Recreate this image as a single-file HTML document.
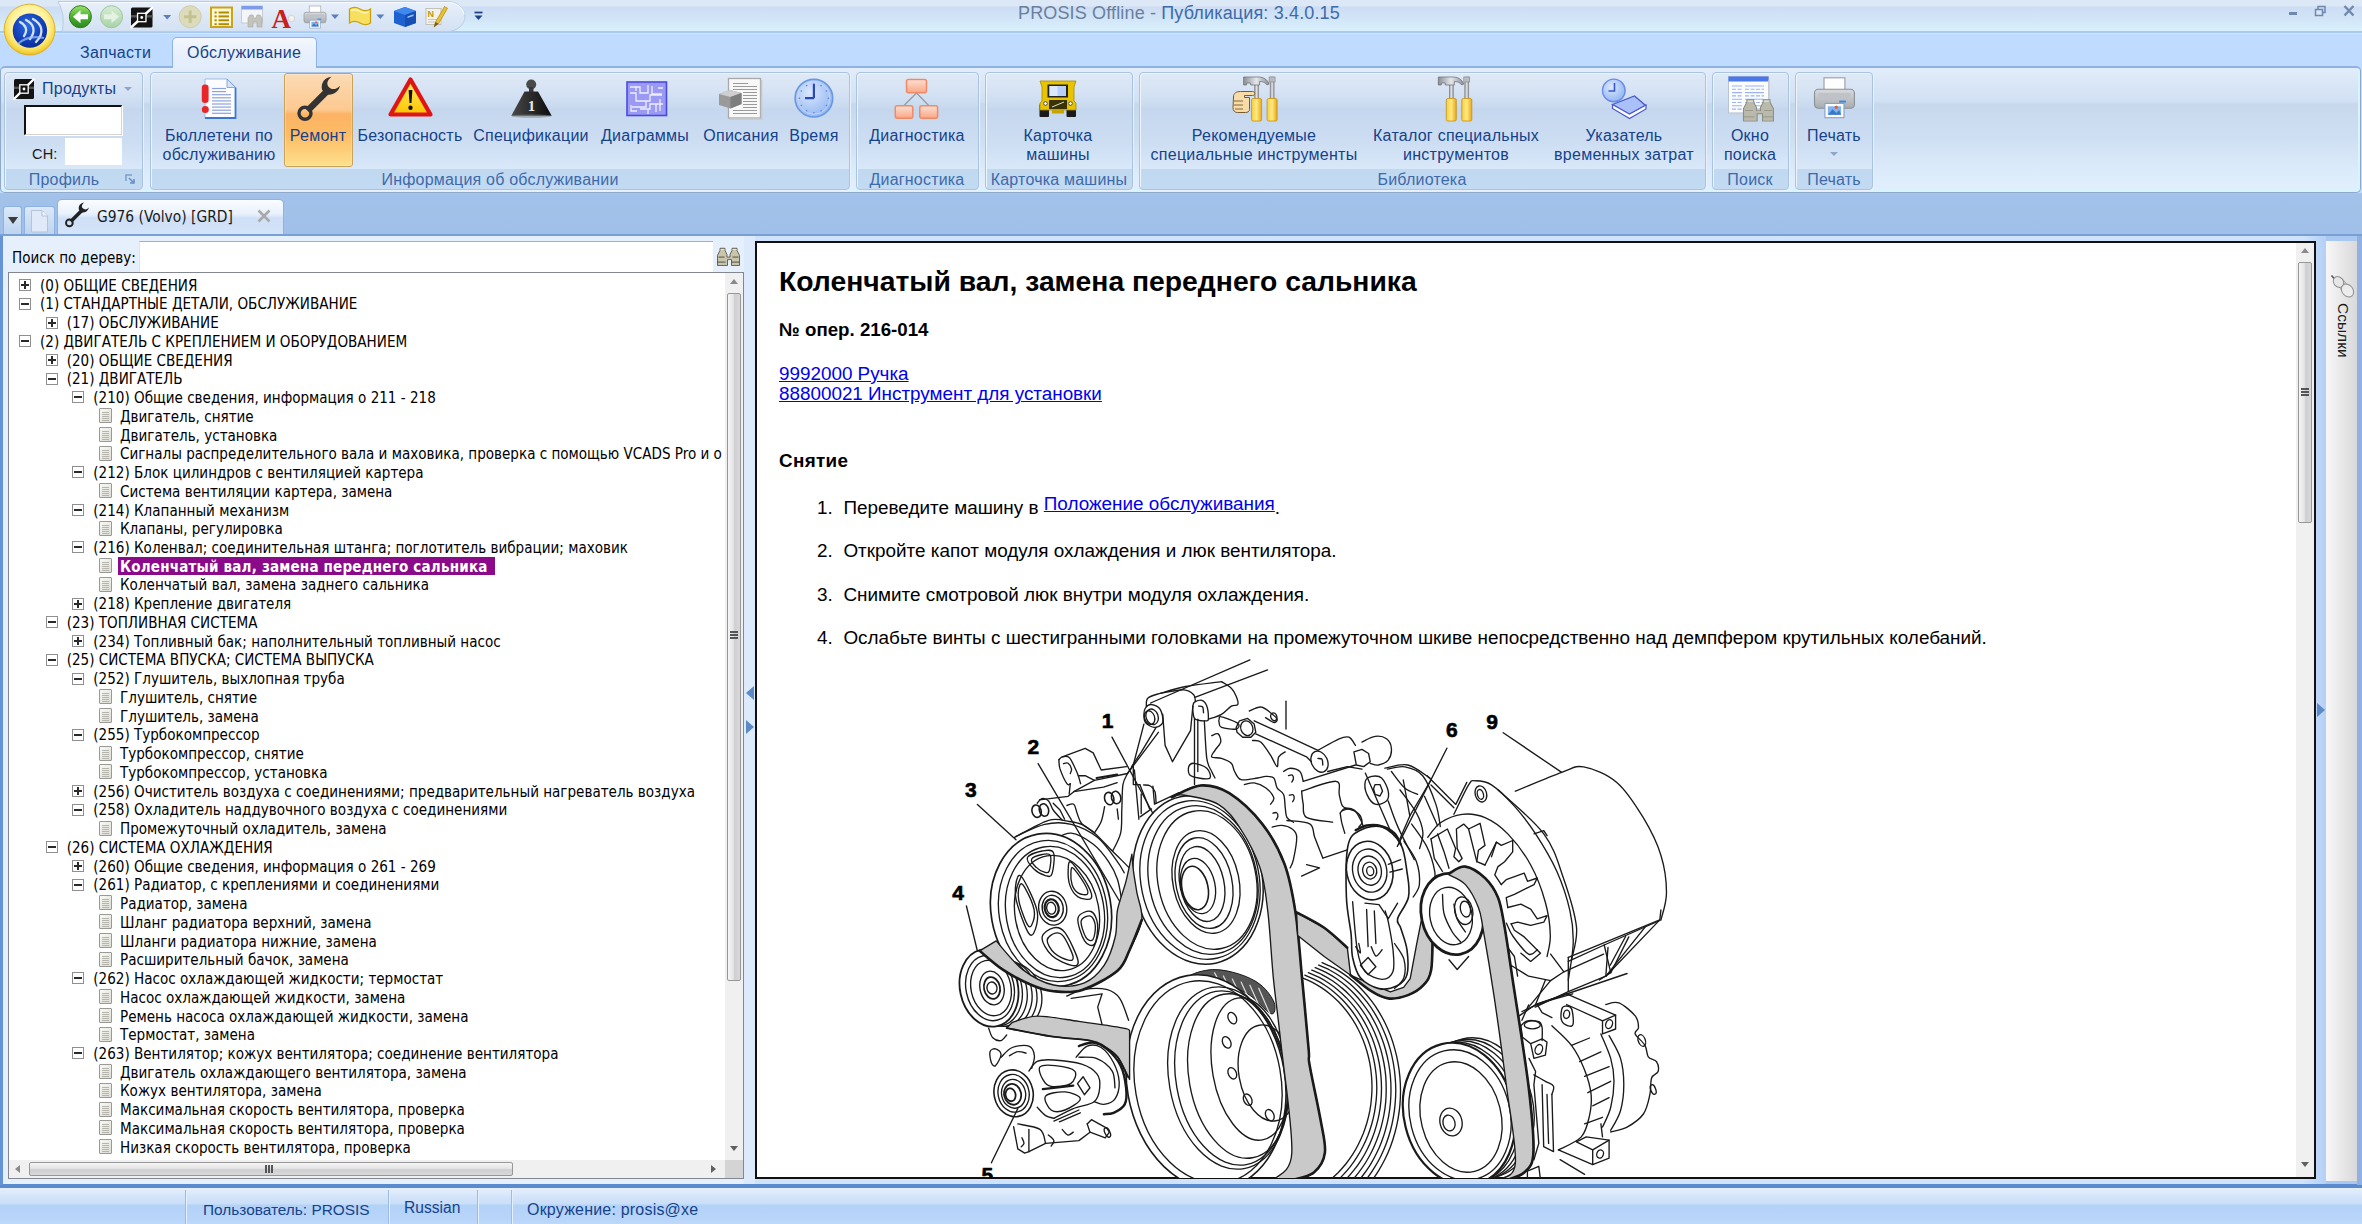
<!DOCTYPE html>
<html lang="ru"><head><meta charset="utf-8"><title>PROSIS Offline</title>
<style>
*{box-sizing:border-box;margin:0;padding:0}
html,body{width:2362px;height:1224px;overflow:hidden}
body{position:relative;background:#bfdbff;font-family:"Liberation Sans",sans-serif;color:#15428b}
.abs,.abs>*{position:absolute}
.abs{left:0;top:0}
.t{white-space:nowrap;line-height:1}
/* title */
#title{left:0;top:0;width:2362px;height:31px;background:linear-gradient(#dde8f7 0,#dde8f7 6px,#cdddf4 7px,#d2e6f8 20px,#d9f0fc 30px,#d9f0fc 31px)}
#tline1{left:0;top:31px;width:2362px;height:2px;background:#a6caf3}
#tline2{left:0;top:33px;width:2362px;height:1px;background:#dde4f3}
#tabrow{left:0;top:34px;width:2362px;height:33px;background:#bfdbff}
#titletxt{left:1018px;top:4px;font-size:18px;letter-spacing:.15px;color:#6a7f9c}
#titletxt b{font-weight:normal;color:#3e6aaa}
/* ribbon */
#ribbon{left:0px;top:66px;width:2361px;height:127px;border:1px solid #8fa9cb;border-top:2px solid #8db2e3;border-radius:5px;box-shadow:inset -1px -1px 0 1px #d6f5fd;background:linear-gradient(#e3edfb 0,#dbe7f7 14px,#d1e0f4 34px,#c7d8ed 36px,#cfdff3 70px,#dbeafa 100px,#e1effd 122px)}
#ribglow{left:0;top:193px;width:2362px;height:1px;background:#a9c4e8}
.grp{border:1px solid #a9c3e3;border-radius:4px;top:72px;height:118px;background:linear-gradient(#dfe9f6 0,#d6e3f4 18px,#c9daef 34px,#c5d7ee 36px,#cddef3 70px,#d9e8f9 96px,#c1d8f1 96px,#c3daf3 117px);box-shadow:1px 1px 0 #e9f2fc, inset 1px 1px 0 #eef4fc}
.glab{font-size:16px;letter-spacing:.2px;color:#3e6aaa;top:172px;text-align:center}
.blab{font-size:16px;letter-spacing:.25px;color:#15428b;text-align:center;line-height:18.5px;white-space:nowrap}
.tabl{font-size:16px;letter-spacing:.3px;color:#15428b}
/* doc tabs */
#dstrip{left:0;top:194px;width:2362px;height:41px;background:linear-gradient(#a3c2ea,#a0c0e9)}
/* tree */
.tr{font-family:"DejaVu Sans Condensed","Liberation Sans",sans-serif;font-size:15.05px;color:#000;white-space:nowrap;line-height:1}
.ex{width:12px;height:12px;border:1px solid #8f8f8f;background:#fff}
.ex i{position:absolute;left:1px;top:4px;width:8px;height:2px;background:#2a2a2a}
.ex b{position:absolute;left:4px;top:1px;width:2px;height:8px;background:#2a2a2a}
.lf{width:13px;height:15px;border:1px solid #9a9a94;background:linear-gradient(135deg,#fafaf6,#dcdcd4);border-radius:1px}
.lf:before{content:"";position:absolute;left:2px;top:3px;width:7px;height:1px;background:#b5b5ad;box-shadow:0 2px 0 #b5b5ad,0 4px 0 #b5b5ad,0 6px 0 #b5b5ad,0 8px 0 #b5b5ad}
/* doc */
.doc{font-family:"Liberation Sans",sans-serif;color:#000;white-space:nowrap;line-height:1}
.doc a,.lnk{color:#0000ee;text-decoration:underline}
/* status */
#status{left:0;top:1188px;width:2362px;height:36px;background:linear-gradient(#e6f0fc 0,#d3e4fa 9px,#c9def9 16px,#b3d2f8 17px,#b7d4f9 28px,#bcd8fa 36px)}
.st{font-size:16px;color:#15428b;top:1201.5px}
.ssep{top:1190px;width:2px;height:34px;background:linear-gradient(90deg,#9cbce6 50%,#e4effc 50%)}

</style></head>
<body>
<div class="abs">
<div id="title"></div><div id="tline1"></div><div id="tline2"></div><div id="tabrow"></div>
<div id="titletxt" class="t">PROSIS Offline - <b>Публикация: 3.4.0.15</b></div>
<div id="ribbon"></div><div id="ribglow"></div>
<div id="dstrip"></div>
</div>
<div class="abs" id="rib">
<div style="left:172px;top:37px;width:145px;height:31px;border:1px solid #8db2e3;border-bottom:none;border-radius:5px 5px 0 0;background:linear-gradient(#f4f8fd,#e6effb 60%,#e3edfb)"></div>
<div class="t tabl" style="left:80px;top:45px">Запчасти</div>
<div class="t tabl" style="left:187px;top:45px">Обслуживание</div>
<div class="grp" style="left:4px;width:139px"></div>
<div class="t glab" style="left:-86px;width:300px">Профиль</div>
<div class="grp" style="left:150px;width:700px"></div>
<div class="t glab" style="left:350px;width:300px">Информация об обслуживании</div>
<div class="grp" style="left:856px;width:123px"></div>
<div class="t glab" style="left:767px;width:300px">Диагностика</div>
<div class="grp" style="left:985px;width:148px"></div>
<div class="t glab" style="left:909px;width:300px">Карточка машины</div>
<div class="grp" style="left:1139px;width:567px"></div>
<div class="t glab" style="left:1272px;width:300px">Библиотека</div>
<div class="grp" style="left:1712px;width:77px"></div>
<div class="t glab" style="left:1600px;width:300px">Поиск</div>
<div class="grp" style="left:1795px;width:78px"></div>
<div class="t glab" style="left:1684px;width:300px">Печать</div>
<div style="left:284px;top:73px;width:69px;height:94px;border:1px solid #c9a35c;border-radius:3px;background:linear-gradient(#fbdbb5 0,#fdc98f 36px,#fcb365 40px,#fdbb63 60px,#fee08e 92px);box-shadow:inset 0 0 0 1px rgba(255,255,255,.25)"></div>
<div class="t blab" style="left:69px;width:300px;top:127.0px">Бюллетени по</div>
<div class="t blab" style="left:69px;width:300px;top:145.5px">обслуживанию</div>
<div class="t blab" style="left:168px;width:300px;top:127.0px">Ремонт</div>
<div class="t blab" style="left:260px;width:300px;top:127.0px">Безопасность</div>
<div class="t blab" style="left:381px;width:300px;top:127.0px">Спецификации</div>
<div class="t blab" style="left:495px;width:300px;top:127.0px">Диаграммы</div>
<div class="t blab" style="left:591px;width:300px;top:127.0px">Описания</div>
<div class="t blab" style="left:664px;width:300px;top:127.0px">Время</div>
<div class="t blab" style="left:767px;width:300px;top:127.0px">Диагностика</div>
<div class="t blab" style="left:908px;width:300px;top:127.0px">Карточка</div>
<div class="t blab" style="left:908px;width:300px;top:145.5px">машины</div>
<div class="t blab" style="left:1104px;width:300px;top:127.0px">Рекомендуемые</div>
<div class="t blab" style="left:1104px;width:300px;top:145.5px">специальные инструменты</div>
<div class="t blab" style="left:1306px;width:300px;top:127.0px">Каталог специальных</div>
<div class="t blab" style="left:1306px;width:300px;top:145.5px">инструментов</div>
<div class="t blab" style="left:1474px;width:300px;top:127.0px">Указатель</div>
<div class="t blab" style="left:1474px;width:300px;top:145.5px">временных затрат</div>
<div class="t blab" style="left:1600px;width:300px;top:127.0px">Окно</div>
<div class="t blab" style="left:1600px;width:300px;top:145.5px">поиска</div>
<div class="t blab" style="left:1684px;width:300px;top:127.0px">Печать</div>
<div style="left:1830px;top:152px;width:0;height:0;border:4px solid transparent;border-top:4px solid #8ea6c8;border-bottom:none"></div>
<div class="t blab" style="left:42px;top:80px">Продукты</div>
<div style="left:124px;top:87px;width:0;height:0;border:4px solid transparent;border-top:4px solid #8ea6c8;border-bottom:none"></div>
<div style="left:24px;top:105px;width:98px;height:30px;background:#fff;border:2px solid #111;border-right:1px solid #d8d4cc;border-bottom:1px solid #d8d4cc;box-shadow:1px 1px 0 #fff"></div>
<div class="t" style="left:32px;top:147px;font-size:14.5px;color:#1a1a1a;letter-spacing:.2px">CH:</div>
<div style="left:65px;top:138px;width:57px;height:27px;background:#fff"></div>
<svg style="left:125px;top:174px" width="12" height="12" viewBox="0 0 12 12"><path d="M1 7V1h6" fill="none" stroke="#7f9fca" stroke-width="1.5"/><path d="M4 4l5 5M9 5v4H5" fill="none" stroke="#6b8fc4" stroke-width="1.6"/></svg>
</div>
<div class="abs" id="left">
<div style="left:3px;top:206px;width:19px;height:29px;border:1px solid #8db2e3;border-bottom:none;border-radius:3px 3px 0 0;background:linear-gradient(#dce9f8,#bcd4f0)"></div>
<div style="left:8px;top:217px;width:0;height:0;border:5px solid transparent;border-top:7px solid #3b3b3b;border-bottom:none"></div>
<div style="left:24px;top:206px;width:31px;height:29px;border:1px solid #8db2e3;border-bottom:none;border-radius:3px 3px 0 0;background:linear-gradient(#dce9f8,#bcd4f0)"></div>
<svg style="left:31px;top:210px" width="18" height="23" viewBox="0 0 18 23"><path d="M.5 .5h10.500l5.500 5.500v16h-16z" fill="#dfe9f7" stroke="#b3c3da"/><path d="M11 .5v5.500h5.500" fill="#eef3fb" stroke="#b3c3da"/></svg>
<div style="left:57px;top:199px;width:227px;height:37px;border:1px solid #8db2e3;border-bottom:none;border-radius:5px 5px 0 0;background:linear-gradient(#fafcff 0,#e9f1fc 14px,#cfe0f7 18px,#d4e4f9 36px)"></div>
<div class="t" style="left:97px;top:209.5px;font-family:'DejaVu Sans Condensed','Liberation Sans',sans-serif;font-size:15.4px;color:#1a1a1a">G976 (Volvo) [GRD]</div>
<svg style="left:256px;top:208px" width="16" height="16" viewBox="0 0 16 16"><path d="M2.5 2.5l11 11M13.5 2.5l-11 11" stroke="#a9a9a9" stroke-width="2.6" fill="none"/></svg>
<div style="left:0;top:234px;width:2362px;height:2px;background:#79a0d4"></div>
<div style="left:0;top:236px;width:2362px;height:949px;background:#a9c8f1"></div>
<div style="left:3px;top:236px;width:2323px;height:948px;background:linear-gradient(90deg,#cfe3fc,#cfe3fc 2300px,#b4d0f6)"></div>
<div style="left:3px;top:236px;width:746px;height:948px;background:#e6f0fc"></div>
<div style="left:744px;top:236px;width:11px;height:948px;background:#dceafb"></div>
<div style="left:0;top:1184px;width:2362px;height:4.5px;background:#5b8bcf"></div>
<div style="left:0;top:236px;width:2.5px;height:949px;background:#6494d7"></div>
<div class="t tr" style="left:12px;top:251px">Поиск по дереву:</div>
<div style="left:139px;top:241px;width:574px;height:31px;background:#fff;border-top:1px solid #abadb3;border-left:1px solid #dfe3ea"></div>
<div style="left:8px;top:272px;width:736px;height:907px;background:#fff;border:1px solid #828790"></div>
<div class="ex" style="left:19.0px;top:279.0px"><i></i><b></b></div>
<div class="t tr" style="left:40.0px;top:278.6px">(0) ОБЩИЕ СВЕДЕНИЯ</div>
<div class="ex" style="left:19.0px;top:297.7px"><i></i></div>
<div class="t tr" style="left:40.0px;top:297.3px">(1) СТАНДАРТНЫЕ ДЕТАЛИ, ОБСЛУЖИВАНИЕ</div>
<div class="ex" style="left:45.7px;top:316.5px"><i></i><b></b></div>
<div class="t tr" style="left:66.7px;top:316.1px">(17) ОБСЛУЖИВАНИЕ</div>
<div class="ex" style="left:19.0px;top:335.2px"><i></i></div>
<div class="t tr" style="left:40.0px;top:334.8px">(2) ДВИГАТЕЛЬ С КРЕПЛЕНИЕМ И ОБОРУДОВАНИЕМ</div>
<div class="ex" style="left:45.7px;top:354.0px"><i></i><b></b></div>
<div class="t tr" style="left:66.7px;top:353.6px">(20) ОБЩИЕ СВЕДЕНИЯ</div>
<div class="ex" style="left:45.7px;top:372.7px"><i></i></div>
<div class="t tr" style="left:66.7px;top:372.3px">(21) ДВИГАТЕЛЬ</div>
<div class="ex" style="left:72.3px;top:391.4px"><i></i></div>
<div class="t tr" style="left:93.3px;top:391.0px">(210) Общие сведения, информация о 211 - 218</div>
<div class="lf" style="left:99px;top:408.2px"></div>
<div class="t tr" style="left:120px;top:409.8px">Двигатель, снятие</div>
<div class="lf" style="left:99px;top:426.9px"></div>
<div class="t tr" style="left:120px;top:428.5px">Двигатель, установка</div>
<div class="lf" style="left:99px;top:445.7px"></div>
<div class="t tr" style="left:120px;top:447.3px">Сигналы распределительного вала и маховика, проверка с помощью VCADS Pro и о</div>
<div class="ex" style="left:72.3px;top:466.4px"><i></i></div>
<div class="t tr" style="left:93.3px;top:466.0px">(212) Блок цилиндров с вентиляцией картера</div>
<div class="lf" style="left:99px;top:483.1px"></div>
<div class="t tr" style="left:120px;top:484.7px">Система вентиляции картера, замена</div>
<div class="ex" style="left:72.3px;top:503.9px"><i></i></div>
<div class="t tr" style="left:93.3px;top:503.5px">(214) Клапанный механизм</div>
<div class="lf" style="left:99px;top:520.6px"></div>
<div class="t tr" style="left:120px;top:522.2px">Клапаны, регулировка</div>
<div class="ex" style="left:72.3px;top:541.4px"><i></i></div>
<div class="t tr" style="left:93.3px;top:541.0px">(216) Коленвал; соединительная штанга; поглотитель вибрации; маховик</div>
<div class="lf" style="left:99px;top:558.1px"></div>
<div style="left:118px;top:557.1px;width:377px;height:18px;background:#8a0a8a"></div>
<div class="t tr" style="left:120px;top:559.7px;font-weight:bold;color:#fff;letter-spacing:.18px">Коленчатый вал, замена переднего сальника</div>
<div class="lf" style="left:99px;top:576.8px"></div>
<div class="t tr" style="left:120px;top:578.4px">Коленчатый вал, замена заднего сальника</div>
<div class="ex" style="left:72.3px;top:597.6px"><i></i><b></b></div>
<div class="t tr" style="left:93.3px;top:597.2px">(218) Крепление двигателя</div>
<div class="ex" style="left:45.7px;top:616.3px"><i></i></div>
<div class="t tr" style="left:66.7px;top:615.9px">(23) ТОПЛИВНАЯ СИСТЕМА</div>
<div class="ex" style="left:72.3px;top:635.1px"><i></i><b></b></div>
<div class="t tr" style="left:93.3px;top:634.7px">(234) Топливный бак; наполнительный топливный насос</div>
<div class="ex" style="left:45.7px;top:653.8px"><i></i></div>
<div class="t tr" style="left:66.7px;top:653.4px">(25) СИСТЕМА ВПУСКА; СИСТЕМА ВЫПУСКА</div>
<div class="ex" style="left:72.3px;top:672.5px"><i></i></div>
<div class="t tr" style="left:93.3px;top:672.1px">(252) Глушитель, выхлопная труба</div>
<div class="lf" style="left:99px;top:689.3px"></div>
<div class="t tr" style="left:120px;top:690.9px">Глушитель, снятие</div>
<div class="lf" style="left:99px;top:708.0px"></div>
<div class="t tr" style="left:120px;top:709.6px">Глушитель, замена</div>
<div class="ex" style="left:72.3px;top:728.8px"><i></i></div>
<div class="t tr" style="left:93.3px;top:728.4px">(255) Турбокомпрессор</div>
<div class="lf" style="left:99px;top:745.5px"></div>
<div class="t tr" style="left:120px;top:747.1px">Турбокомпрессор, снятие</div>
<div class="lf" style="left:99px;top:764.2px"></div>
<div class="t tr" style="left:120px;top:765.8px">Турбокомпрессор, установка</div>
<div class="ex" style="left:72.3px;top:785.0px"><i></i><b></b></div>
<div class="t tr" style="left:93.3px;top:784.6px">(256) Очиститель воздуха с соединениями; предварительный нагреватель воздуха</div>
<div class="ex" style="left:72.3px;top:803.7px"><i></i></div>
<div class="t tr" style="left:93.3px;top:803.3px">(258) Охладитель наддувочного воздуха с соединениями</div>
<div class="lf" style="left:99px;top:820.5px"></div>
<div class="t tr" style="left:120px;top:822.1px">Промежуточный охладитель, замена</div>
<div class="ex" style="left:45.7px;top:841.2px"><i></i></div>
<div class="t tr" style="left:66.7px;top:840.8px">(26) СИСТЕМА ОХЛАЖДЕНИЯ</div>
<div class="ex" style="left:72.3px;top:859.9px"><i></i><b></b></div>
<div class="t tr" style="left:93.3px;top:859.5px">(260) Общие сведения, информация о 261 - 269</div>
<div class="ex" style="left:72.3px;top:878.7px"><i></i></div>
<div class="t tr" style="left:93.3px;top:878.3px">(261) Радиатор, с креплениями и соединениями</div>
<div class="lf" style="left:99px;top:895.4px"></div>
<div class="t tr" style="left:120px;top:897.0px">Радиатор, замена</div>
<div class="lf" style="left:99px;top:914.2px"></div>
<div class="t tr" style="left:120px;top:915.8px">Шланг радиатора верхний, замена</div>
<div class="lf" style="left:99px;top:932.9px"></div>
<div class="t tr" style="left:120px;top:934.5px">Шланги радиатора нижние, замена</div>
<div class="lf" style="left:99px;top:951.6px"></div>
<div class="t tr" style="left:120px;top:953.2px">Расширительный бачок, замена</div>
<div class="ex" style="left:72.3px;top:972.4px"><i></i></div>
<div class="t tr" style="left:93.3px;top:972.0px">(262) Насос охлаждающей жидкости; термостат</div>
<div class="lf" style="left:99px;top:989.1px"></div>
<div class="t tr" style="left:120px;top:990.7px">Насос охлаждающей жидкости, замена</div>
<div class="lf" style="left:99px;top:1007.9px"></div>
<div class="t tr" style="left:120px;top:1009.5px">Ремень насоса охлаждающей жидкости, замена</div>
<div class="lf" style="left:99px;top:1026.6px"></div>
<div class="t tr" style="left:120px;top:1028.2px">Термостат, замена</div>
<div class="ex" style="left:72.3px;top:1047.3px"><i></i></div>
<div class="t tr" style="left:93.3px;top:1046.9px">(263) Вентилятор; кожух вентилятора; соединение вентилятора</div>
<div class="lf" style="left:99px;top:1064.1px"></div>
<div class="t tr" style="left:120px;top:1065.7px">Двигатель охлаждающего вентилятора, замена</div>
<div class="lf" style="left:99px;top:1082.8px"></div>
<div class="t tr" style="left:120px;top:1084.4px">Кожух вентилятора, замена</div>
<div class="lf" style="left:99px;top:1101.6px"></div>
<div class="t tr" style="left:120px;top:1103.2px">Максимальная скорость вентилятора, проверка</div>
<div class="lf" style="left:99px;top:1120.3px"></div>
<div class="t tr" style="left:120px;top:1121.9px">Максимальная скорость вентилятора, проверка</div>
<div class="lf" style="left:99px;top:1139.0px"></div>
<div class="t tr" style="left:120px;top:1140.6px">Низкая скорость вентилятора, проверка</div>
<div style="left:725px;top:273px;width:18px;height:887px;background:#f0f0f0"></div>
<div style="left:727px;top:293px;width:14px;height:688px;border:1px solid #979797;border-radius:2px;background:linear-gradient(90deg,#f5f5f5,#e4e4e6 45%,#cfcfd2 55%,#d8d8da)"></div>
<div style="left:730px;top:631px;width:8px;height:2px;background:#555;box-shadow:0 3px 0 #555,0 6px 0 #555"></div>
<div style="left:730px;top:279px;width:0;height:0;border:4px solid transparent;border-bottom:5px solid #8a8a8a;border-top:none"></div>
<div style="left:730px;top:1146px;width:0;height:0;border:4px solid transparent;border-top:5px solid #606060;border-bottom:none"></div>
<div style="left:9px;top:1160px;width:716px;height:18px;background:#f0f0f0"></div>
<div style="left:725px;top:1160px;width:18px;height:18px;background:#d4d4d4"></div>
<div style="left:29px;top:1162px;width:484px;height:14px;border:1px solid #979797;border-radius:2px;background:linear-gradient(#f5f5f5,#e4e4e6 45%,#cfcfd2 55%,#d8d8da)"></div>
<div style="left:265px;top:1165px;width:2px;height:8px;background:#555;box-shadow:3px 0 0 #555,6px 0 0 #555"></div>
<div style="left:15px;top:1165px;width:0;height:0;border:4px solid transparent;border-right:5px solid #8a8a8a;border-left:none"></div>
<div style="left:711px;top:1165px;width:0;height:0;border:4px solid transparent;border-left:5px solid #606060;border-right:none"></div>
<div style="left:746px;top:686px;width:0;height:0;border:7.5px solid transparent;border-right:8px solid #5b8ac6;border-left:none"></div>
<div style="left:746px;top:720px;width:0;height:0;border:7.5px solid transparent;border-left:8px solid #5b8ac6;border-right:none"></div>
</div>
<div class="abs" id="doc">
<div style="left:755px;top:241px;width:1561px;height:938px;background:#fff;border:2px solid #111"></div>
<div style="left:2296px;top:243px;width:18px;height:934px;background:#f0f0f0"></div>
<div style="left:2298px;top:262px;width:14px;height:261px;border:1px solid #979797;border-radius:2px;background:linear-gradient(90deg,#f5f5f5,#e4e4e6 45%,#cfcfd2 55%,#d8d8da)"></div>
<div style="left:2301px;top:388px;width:8px;height:2px;background:#555;box-shadow:0 3px 0 #555,0 6px 0 #555"></div>
<div style="left:2301px;top:248px;width:0;height:0;border:4px solid transparent;border-bottom:5px solid #8a8a8a;border-top:none"></div>
<div style="left:2301px;top:1162px;width:0;height:0;border:4px solid transparent;border-top:5px solid #606060;border-bottom:none"></div>
<div class="t doc" style="left:779px;top:266.7px;font-size:28.3px;font-weight:bold;">Коленчатый вал, замена переднего сальника</div>
<div class="t doc" style="left:779px;top:320.5px;font-size:18.7px;font-weight:bold;">№ опер. 216-014</div>
<div class="t doc" style="left:779px;top:364.5px;font-size:18.85px;"><span class="lnk">9992000 Ручка</span></div>
<div class="t doc" style="left:779px;top:385.3px;font-size:18.85px;"><span class="lnk">88800021 Инструмент для установки</span></div>
<div class="t doc" style="left:779px;top:451.5px;font-size:18.85px;font-weight:bold;letter-spacing:.35px;">Снятие</div>
<div class="t doc" style="left:817px;top:498.8px;font-size:18.9px;">1.</div>
<div class="t doc" style="left:843.4px;top:498.8px;font-size:18.9px;">Переведите машину в <span class="lnk" style="position:relative;top:-4px">Положение обслуживания</span>.</div>
<div class="t doc" style="left:817px;top:542.2px;font-size:18.9px;">2.</div>
<div class="t doc" style="left:843.4px;top:542.2px;font-size:18.9px;">Откройте капот модуля охлаждения и люк вентилятора.</div>
<div class="t doc" style="left:817px;top:585.6px;font-size:18.9px;">3.</div>
<div class="t doc" style="left:843.4px;top:585.6px;font-size:18.9px;">Снимите смотровой люк внутри модуля охлаждения.</div>
<div class="t doc" style="left:817px;top:629.0px;font-size:18.9px;">4.</div>
<div class="t doc" style="left:843.4px;top:629.0px;font-size:18.9px;">Ослабьте винты с шестигранными головками на промежуточном шкиве непосредственно над демпфером крутильных колебаний.</div>
</div>
<div class="abs"><svg class="dg" style="position:absolute;left:900px;top:655px" width="850" height="523" viewBox="900 655 850 523" stroke-linecap="round" stroke-linejoin="round">
<path d="M1150.6 703.0 L1249.9 659.9" fill="none" stroke="#1a1a1a" stroke-width="1.35" />
<path d="M1194.8 697.4 L1267.6 669.9" fill="none" stroke="#1a1a1a" stroke-width="1.35" />
<path d="M1146.3 706.1 C1146.6 704.8 1145.5 700.2 1148.0 698.0 C1150.4 695.8 1154.8 695.0 1161.0 693.1 C1167.3 691.2 1175.5 688.4 1185.6 686.5 C1195.6 684.6 1215.5 682.5 1221.5 681.6" fill="none" stroke="#1a1a1a" stroke-width="1.35" />
<path d="M1161.0 693.1 C1164.9 692.5 1178.5 689.5 1183.9 689.8 C1189.4 690.1 1191.8 692.8 1193.7 694.7 C1195.6 696.6 1195.1 700.2 1195.4 701.2" fill="none" stroke="#1a1a1a" stroke-width="1.35" />
<path d="M1145.5 707.8 C1146.7 706.1 1148.8 704.2 1151.2 704.5 C1153.7 704.8 1158.3 706.4 1160.2 709.4 C1162.1 712.4 1163.6 719.5 1162.7 722.5 C1161.7 725.5 1157.4 727.4 1154.5 727.4 C1151.7 727.4 1147.3 724.7 1145.5 722.5 C1143.8 720.3 1143.9 716.8 1143.9 714.3 C1143.9 711.9 1144.3 709.4 1145.5 707.8Z" fill="none" stroke="#1a1a1a" stroke-width="1.35" />
<ellipse cx="1152.1" cy="716.8" rx="6.0" ry="8.0" transform="rotate(-20 1152.1 716.8)" fill="none" stroke="#1a1a1a" stroke-width="1.35"/>
<ellipse cx="1149.6" cy="717.6" rx="5.0" ry="7.0" transform="rotate(-20 1149.6 717.6)" fill="none" stroke="#1a1a1a" stroke-width="1.35"/>
<path d="M1143.9 724.1 L1133.3 765.0" fill="none" stroke="#1a1a1a" stroke-width="1.35" />
<path d="M1162.7 714.3 L1165.1 745.4 L1172.5 761.7 L1190.5 730.7 L1192.9 706.1" fill="none" stroke="#1a1a1a" stroke-width="1.35" />
<path d="M1156.1 727.4 L1141.4 751.9 L1131.6 766.6" fill="none" stroke="#1a1a1a" stroke-width="1.35" />
<path d="M1139.8 784.6 L1149.6 809.1" fill="none" stroke="#1a1a1a" stroke-width="1.35" />
<path d="M1133.3 765.0 L1133.3 784.6 L1139.8 784.6" fill="none" stroke="#1a1a1a" stroke-width="1.35" />
<path d="M1152.9 786.2 L1154.5 804.2 L1179.0 792.7" fill="none" stroke="#1a1a1a" stroke-width="1.35" />
<path d="M1192.9 706.1 C1193.2 704.6 1193.0 703.0 1194.5 702.1 C1196.0 701.1 1199.9 699.7 1201.9 700.4 C1203.9 701.1 1205.7 703.3 1206.8 706.1 C1207.9 709.0 1208.4 715.1 1208.4 717.6 C1208.4 720.0 1209.0 720.6 1206.8 720.8 C1204.6 721.1 1197.7 720.8 1195.4 719.2 C1193.0 717.6 1193.3 713.2 1192.9 711.0 C1192.5 708.9 1192.6 707.6 1192.9 706.1Z" fill="none" stroke="#1a1a1a" stroke-width="1.35" />
<path d="M1198.6 706.1 C1199.3 706.3 1201.9 705.9 1202.7 707.0 C1203.5 708.1 1203.4 711.7 1203.5 712.7" fill="none" stroke="#1a1a1a" stroke-width="1.35" />
<path d="M1194.5 719.2 L1194.5 784.6" fill="none" stroke="#1a1a1a" stroke-width="1.35" />
<path d="M1197.8 719.2 L1197.8 771.5" fill="none" stroke="#1a1a1a" stroke-width="1.35" />
<path d="M1204.3 720.8 C1204.8 727.1 1205.6 750.0 1206.8 758.4 C1208.0 766.9 1210.3 768.2 1211.7 771.5 C1213.1 774.8 1214.4 776.9 1215.0 778.0" fill="none" stroke="#1a1a1a" stroke-width="1.35" />
<path d="M1188.8 766.6 C1189.5 764.7 1190.7 763.1 1193.7 763.3 C1196.7 763.6 1204.1 765.8 1206.8 768.2 C1209.5 770.7 1211.4 776.4 1210.1 778.0 C1208.7 779.7 1202.0 778.6 1198.6 778.0 C1195.2 777.5 1191.3 776.7 1189.6 774.8 C1188.0 772.9 1188.1 768.5 1188.8 766.6Z" fill="none" stroke="#1a1a1a" stroke-width="1.35" />
<path d="M1208.4 719.2 C1210.6 718.4 1217.7 716.5 1221.5 714.3 C1225.3 712.1 1228.6 707.8 1231.3 706.1 C1234.0 704.5 1237.0 706.1 1237.8 704.5 C1238.7 702.9 1237.3 699.1 1236.2 696.3 C1235.1 693.6 1233.8 690.6 1231.3 688.2 C1228.9 685.7 1223.1 682.7 1221.5 681.6" fill="none" stroke="#1a1a1a" stroke-width="1.35" />
<path d="M1219.1 719.2 C1219.5 718.3 1218.4 716.1 1221.5 716.8 C1224.6 717.4 1235.4 721.3 1237.8 723.3 C1240.3 725.3 1238.9 728.3 1236.2 729.0 C1233.5 729.7 1224.4 728.5 1221.5 727.4 C1218.6 726.3 1219.5 723.8 1219.1 722.5 C1218.6 721.1 1218.6 720.2 1219.1 719.2Z" fill="none" stroke="#1a1a1a" stroke-width="1.35" />
<path d="M1236.2 727.4 L1239.5 720.8 L1247.6 718.4 L1254.2 724.1 L1255.8 732.3 L1250.9 737.2 L1242.7 737.2 L1237.0 732.3 L1236.2 727.4" fill="none" stroke="#1a1a1a" stroke-width="1.35" />
<ellipse cx="1246.8" cy="728.2" rx="6.0" ry="7.5" transform="rotate(-20 1246.8 728.2)" fill="none" stroke="#1a1a1a" stroke-width="1.35"/>
<path d="M1254.2 720.8 L1317.9 750.3" fill="none" stroke="#1a1a1a" stroke-width="1.35" />
<path d="M1255.8 733.9 L1306.5 756.8 L1311.4 761.7" fill="none" stroke="#1a1a1a" stroke-width="1.35" />
<path d="M1249.3 711.0 C1251.2 710.4 1257.2 706.7 1260.7 707.0 C1264.3 707.2 1267.8 710.6 1270.5 712.7 C1273.2 714.7 1276.5 717.6 1277.1 719.2 C1277.6 720.8 1275.7 722.8 1273.8 722.5 C1271.9 722.2 1267.0 718.4 1265.6 717.6" fill="none" stroke="#1a1a1a" stroke-width="1.35" />
<ellipse cx="1273.8" cy="716.8" rx="3.0" ry="4.0" transform="rotate(-20 1273.8 716.8)" fill="none" stroke="#1a1a1a" stroke-width="1.35"/>
<path d="M1286.0 701.2 L1286.0 729.0" fill="none" stroke="#1a1a1a" stroke-width="1.35" />
<ellipse cx="1319.5" cy="761.7" rx="8.0" ry="11.0" transform="rotate(-25 1319.5 761.7)" fill="none" stroke="#1a1a1a" stroke-width="1.35"/>
<path d="M1317.9 758.4 C1318.6 758.6 1321.2 758.2 1322.0 759.2 C1322.8 760.3 1322.7 764.0 1322.8 765.0" fill="none" stroke="#1a1a1a" stroke-width="1.35" />
<path d="M1317.9 750.3 C1321.4 748.4 1334.0 741.0 1339.2 738.8 C1344.3 736.6 1346.2 736.1 1349.0 737.2 C1351.7 738.3 1354.4 744.0 1355.5 745.4" fill="none" stroke="#1a1a1a" stroke-width="1.35" />
<path d="M1327.7 771.5 L1347.3 766.6 L1362.0 769.1" fill="none" stroke="#1a1a1a" stroke-width="1.35" />
<path d="M1353.9 751.9 L1362.0 749.4 L1368.6 753.5 L1370.2 761.7 L1363.7 766.6 L1356.3 765.0 L1353.9 751.9" fill="none" stroke="#1a1a1a" stroke-width="1.35" />
<path d="M1362.0 742.1 C1364.2 741.1 1371.0 736.9 1375.1 736.4 C1379.2 735.8 1383.8 736.8 1386.5 738.8 C1389.3 740.9 1391.2 745.1 1391.4 748.6 C1391.7 752.2 1390.3 757.3 1388.2 760.1 C1386.0 762.8 1381.4 764.4 1378.4 765.0 C1375.4 765.5 1371.6 763.6 1370.2 763.3" fill="none" stroke="#1a1a1a" stroke-width="1.35" />
<path d="M1211.7 735.6 C1212.8 735.3 1216.7 732.8 1218.2 733.9 C1219.7 735.0 1221.2 739.4 1220.7 742.1 C1220.1 744.8 1216.5 747.8 1215.0 750.3 C1213.5 752.7 1210.6 755.4 1211.7 756.8 C1212.8 758.2 1218.2 757.3 1221.5 758.4 C1224.8 759.5 1229.1 761.2 1231.3 763.3 C1233.5 765.5 1232.9 768.8 1234.6 771.5 C1236.2 774.2 1237.3 778.6 1241.1 779.7 C1244.9 780.8 1253.4 778.6 1257.5 778.0 C1261.5 777.5 1262.9 776.4 1265.6 776.4 C1268.3 776.4 1271.9 776.1 1273.8 778.0 C1275.7 779.9 1275.4 785.1 1277.1 787.8 C1278.7 790.6 1282.2 791.1 1283.6 794.4 C1285.0 797.6 1284.7 803.6 1285.2 807.5 C1285.8 811.3 1285.5 814.8 1286.9 817.3 C1288.2 819.7 1292.3 821.3 1293.4 822.2" fill="none" stroke="#1a1a1a" stroke-width="1.35" />
<path d="M1252.5 740.5 C1253.9 740.7 1257.7 739.6 1260.7 742.1 C1263.7 744.5 1267.8 751.1 1270.5 755.2 C1273.2 759.2 1275.7 766.3 1277.1 766.6 C1278.4 766.9 1277.3 759.2 1278.7 756.8 C1280.1 754.3 1284.1 752.7 1285.2 751.9" fill="none" stroke="#1a1a1a" stroke-width="1.35" />
<path d="M1283.6 771.5 C1284.7 771.0 1287.4 768.2 1290.1 768.2 C1292.9 768.2 1297.8 769.3 1299.9 771.5 C1302.1 773.7 1302.7 779.7 1303.2 781.3" fill="none" stroke="#1a1a1a" stroke-width="1.35" />
<path d="M1303.2 781.3 L1355.5 765.0" fill="none" stroke="#1a1a1a" stroke-width="1.35" />
<path d="M1288.5 775.6 C1289.1 775.5 1291.4 774.6 1292.3 775.1 C1293.1 775.6 1293.5 777.7 1293.4 778.9 C1293.3 780.0 1292.0 781.6 1291.8 782.1" fill="none" stroke="#1a1a1a" stroke-width="1.35" />
<path d="M1289.3 795.2 C1289.9 795.1 1292.3 794.2 1293.1 794.7 C1293.9 795.3 1294.3 797.3 1294.2 798.5 C1294.1 799.6 1292.9 801.2 1292.6 801.7" fill="none" stroke="#1a1a1a" stroke-width="1.35" />
<path d="M1273.0 813.2 C1273.6 813.1 1275.9 812.1 1276.7 812.7 C1277.5 813.2 1278.0 815.3 1277.9 816.4 C1277.8 817.6 1276.5 819.2 1276.2 819.7" fill="none" stroke="#1a1a1a" stroke-width="1.35" />
<path d="M1209.2 821.3 C1209.9 821.3 1212.2 820.3 1213.0 820.8 C1213.8 821.4 1214.2 823.4 1214.2 824.6 C1214.1 825.8 1212.8 827.3 1212.5 827.9" fill="none" stroke="#1a1a1a" stroke-width="1.35" />
<path d="M1301.6 791.1 C1307.3 789.5 1329.6 780.8 1335.9 781.3 C1342.1 781.9 1338.1 790.3 1339.2 794.4 C1340.2 798.5 1340.8 803.4 1342.4 805.8 C1344.1 808.3 1347.9 808.5 1349.0 809.1" fill="none" stroke="#1a1a1a" stroke-width="1.35" />
<path d="M1301.6 791.1 C1301.8 793.3 1302.4 799.8 1303.2 804.2 C1304.0 808.5 1301.6 814.3 1306.5 817.3 C1311.4 820.3 1328.3 821.3 1332.6 822.2" fill="none" stroke="#1a1a1a" stroke-width="1.35" />
<path d="M1286.9 820.5 C1290.7 821.1 1305.1 821.1 1309.7 823.8 C1314.4 826.5 1312.5 831.1 1314.6 836.9 C1316.8 842.6 1321.4 854.6 1322.8 858.1" fill="none" stroke="#1a1a1a" stroke-width="1.35" />
<path d="M1322.8 858.1 L1347.3 849.9" fill="none" stroke="#1a1a1a" stroke-width="1.35" />
<path d="M1272.2 827.1 C1273.8 826.8 1278.7 825.2 1282.0 825.4 C1285.2 825.7 1289.3 826.8 1291.8 828.7 C1294.2 830.6 1296.4 831.7 1296.7 836.9 C1296.9 842.0 1294.5 854.6 1293.4 859.7 C1292.3 864.9 1290.7 866.5 1290.1 867.9" fill="none" stroke="#1a1a1a" stroke-width="1.35" />
<path d="M1306.5 864.6 L1319.5 867.9 L1301.6 876.1" fill="none" stroke="#1a1a1a" stroke-width="1.35" />
<path d="M1342.4 810.7 C1343.5 810.4 1346.2 808.5 1349.0 809.1 C1351.7 809.6 1356.6 811.8 1358.8 814.0 C1360.9 816.2 1362.0 820.0 1362.0 822.2 C1362.0 824.3 1359.3 826.2 1358.8 827.1" fill="none" stroke="#1a1a1a" stroke-width="1.35" />
<path d="M1365.3 773.1 L1398.0 848.3" fill="none" stroke="#1a1a1a" stroke-width="1.35" />
<path d="M1365.3 781.3 C1366.1 778.3 1369.1 776.9 1371.8 776.4 C1374.6 775.9 1378.9 775.6 1381.6 778.0 C1384.4 780.5 1387.4 787.3 1388.2 791.1 C1389.0 794.9 1388.7 798.7 1386.5 800.9 C1384.4 803.1 1378.4 805.3 1375.1 804.2 C1371.8 803.1 1368.6 798.2 1366.9 794.4 C1365.3 790.6 1364.5 784.3 1365.3 781.3Z" fill="none" stroke="#1a1a1a" stroke-width="1.35" />
<path d="M1375.1 784.6 L1380.0 784.6 L1382.5 791.1 L1380.0 796.0 L1375.1 794.4 L1373.5 788.7 L1375.1 784.6" fill="none" stroke="#1a1a1a" stroke-width="1.35" />
<path d="M1384.9 768.2 C1388.7 767.7 1400.3 763.3 1407.8 765.0 C1415.3 766.6 1426.3 775.9 1430.0 778.0" fill="none" stroke="#1a1a1a" stroke-width="1.35" />
<path d="M1391.4 771.5 C1393.6 774.2 1400.2 784.0 1404.5 787.8 C1408.9 791.7 1415.4 793.3 1417.6 794.4" fill="none" stroke="#1a1a1a" stroke-width="1.35" />
<path d="M1388.2 800.9 C1389.8 805.3 1393.6 817.3 1398.0 827.1 C1402.3 836.9 1411.6 854.3 1414.3 859.7" fill="none" stroke="#1a1a1a" stroke-width="1.35" />
<path d="M1244.4 784.6 C1246.0 784.3 1250.6 782.4 1254.2 782.9 C1257.7 783.5 1262.4 785.4 1265.6 787.8 C1268.9 790.3 1273.0 794.9 1273.8 797.6 C1274.6 800.4 1271.1 803.1 1270.5 804.2" fill="none" stroke="#1a1a1a" stroke-width="1.35" />
<path d="M1058.9 759.7 C1059.5 759.3 1060.6 757.3 1062.3 756.9 C1064.0 756.5 1067.1 755.6 1069.2 757.4 C1071.3 759.3 1073.4 764.7 1074.9 767.7 C1076.4 770.8 1077.4 773.1 1078.3 775.7 C1079.3 778.4 1080.2 782.4 1080.6 783.7" fill="none" stroke="#1a1a1a" stroke-width="1.35" />
<path d="M1058.9 759.7 C1059.1 761.3 1058.7 764.9 1060.0 768.9 C1061.4 772.9 1065.2 781.3 1066.9 783.7 C1068.6 786.2 1069.8 783.7 1070.3 783.7" fill="none" stroke="#1a1a1a" stroke-width="1.35" />
<path d="M1062.3 756.9 L1085.2 748.3 L1093.2 752.9 L1101.2 770.0 L1126.4 766.6" fill="none" stroke="#1a1a1a" stroke-width="1.35" />
<path d="M1063.5 763.7 C1064.2 763.6 1066.7 762.3 1068.1 763.2 C1069.4 764.0 1071.1 767.2 1071.5 768.9 C1071.9 770.6 1070.5 772.7 1070.3 773.5" fill="none" stroke="#1a1a1a" stroke-width="1.35" />
<path d="M1078.3 775.7 L1085.2 775.7 L1094.4 780.3 L1127.5 773.5 L1132.1 766.6" fill="none" stroke="#1a1a1a" stroke-width="1.35" />
<path d="M1094.4 780.3 L1073.8 791.7 L1068.1 796.3 L1039.5 799.8" fill="none" stroke="#1a1a1a" stroke-width="1.35" />
<path d="M1070.3 783.7 L1069.2 794.0" fill="none" stroke="#1a1a1a" stroke-width="1.35" />
<path d="M1073.8 791.7 L1103.5 787.2 L1117.2 782.6" fill="none" stroke="#1a1a1a" stroke-width="1.35" />
<path d="M1096.6 778.0 L1117.2 774.6" fill="none" stroke="#1a1a1a" stroke-width="2" />
<path d="M1127.5 773.5 C1126.8 775.4 1123.9 778.8 1122.9 784.9 C1122.0 791.0 1122.2 802.0 1121.8 810.0 C1121.4 818.1 1122.2 826.1 1120.7 832.9 C1119.1 839.8 1114.0 848.2 1112.6 851.2" fill="none" stroke="#1a1a1a" stroke-width="1.35" />
<ellipse cx="1036.6" cy="811.2" rx="4.6" ry="6.3" transform="rotate(-15 1036.6 811.2)" fill="none" stroke="#1a1a1a" stroke-width="1.6"/>
<ellipse cx="1044.0" cy="810.0" rx="4.6" ry="6.3" transform="rotate(-15 1044.0 810.0)" fill="none" stroke="#1a1a1a" stroke-width="1.6"/>
<ellipse cx="1109.2" cy="798.6" rx="4.6" ry="6.3" transform="rotate(-15 1109.2 798.6)" fill="none" stroke="#1a1a1a" stroke-width="1.6"/>
<ellipse cx="1116.1" cy="797.5" rx="4.6" ry="6.3" transform="rotate(-15 1116.1 797.5)" fill="none" stroke="#1a1a1a" stroke-width="1.6"/>
<path d="M1037.2 803.2 C1037.9 802.4 1039.8 799.0 1041.7 798.6 C1043.7 798.2 1046.7 799.0 1048.6 800.9 C1050.5 802.8 1050.9 806.8 1053.2 810.0 C1055.5 813.3 1060.8 818.6 1062.3 820.3" fill="none" stroke="#1a1a1a" stroke-width="1.35" />
<path d="M1066.9 805.5 C1068.1 805.3 1072.1 803.0 1073.8 804.3 C1075.5 805.7 1075.9 810.2 1077.2 813.5 C1078.5 816.7 1078.9 820.5 1081.8 823.8 C1084.6 827.0 1089.2 828.3 1094.4 832.9 C1099.5 837.5 1106.9 845.5 1112.6 851.2 C1118.4 856.9 1126.0 864.6 1128.7 867.2" fill="none" stroke="#1a1a1a" stroke-width="1.35" />
<path d="M1104.6 806.6 C1104.1 809.1 1102.9 817.1 1101.2 821.5 C1099.5 825.9 1095.5 831.0 1094.4 832.9" fill="none" stroke="#1a1a1a" stroke-width="1.35" />
<path d="M1014.3 837.5 C1020.0 834.6 1039.5 823.0 1048.6 820.3 C1057.8 817.7 1063.5 820.7 1069.2 821.5 C1074.9 822.2 1078.7 823.0 1082.9 824.9 C1087.1 826.8 1092.4 831.6 1094.4 832.9" fill="none" stroke="#1a1a1a" stroke-width="1.35" />
<path d="M1127.5 773.5 L1158.4 732.3" fill="none" stroke="#1a1a1a" stroke-width="1.35" />
<path d="M1134.4 770.0 L1138.9 819.2" fill="none" stroke="#1a1a1a" stroke-width="1.35" />
<path d="M1141.2 794.0 L1141.2 813.5" fill="none" stroke="#1a1a1a" stroke-width="1.35" />
<path d="M1143.5 784.9 C1144.7 785.1 1148.5 784.9 1150.4 786.0 C1152.3 787.2 1154.0 788.9 1155.0 791.7 C1155.9 794.6 1155.9 801.3 1156.1 803.2" fill="none" stroke="#1a1a1a" stroke-width="1.35" />
<path d="M1140.1 816.9 L1151.5 808.9" fill="none" stroke="#1a1a1a" stroke-width="1.35" />
<path d="M1053.2 803.2 L1060.0 810.0 L1064.6 819.2" fill="none" stroke="#1a1a1a" stroke-width="1.35" />
<path d="M1117.2 808.9 L1118.4 819.2" fill="none" stroke="#1a1a1a" stroke-width="1.35" />
<path d="M1515.3 791.2 C1523.1 788.1 1550.3 776.5 1561.7 772.4 C1573.1 768.4 1574.5 765.3 1583.7 766.9 C1592.9 768.6 1606.9 773.9 1616.8 782.4 C1626.7 790.8 1635.9 805.5 1643.3 817.7 C1650.6 829.8 1657.1 842.7 1660.9 855.2 C1664.8 867.7 1666.5 881.9 1666.5 892.7 C1666.5 903.5 1661.9 915.5 1660.9 920.0" fill="none" stroke="#1a1a1a" stroke-width="1.35" />
<path d="M1660.9 910.0 L1659.8 919.9 L1568.3 957.4" fill="none" stroke="#1a1a1a" stroke-width="1.35" />
<path d="M1659.8 919.9 L1605.8 976.2 L1568.3 991.6 L1535.2 1007.1" fill="none" stroke="#1a1a1a" stroke-width="1.35" />
<path d="M1605.8 976.2 L1608.0 947.5" fill="none" stroke="#1a1a1a" stroke-width="1.35" />
<path d="M1568.3 957.4 L1568.3 991.6" fill="none" stroke="#1a1a1a" stroke-width="1.35" />
<path d="M1625.6 936.5 L1610.2 965.2" fill="none" stroke="#1a1a1a" stroke-width="1.35" />
<path d="M1453.9 814.3 C1456.4 809.4 1465.1 790.5 1468.6 784.9 C1472.2 779.3 1471.4 780.8 1475.2 780.8 C1479.0 780.8 1485.0 780.7 1491.5 784.9 C1498.0 789.1 1507.0 798.0 1514.4 806.1 C1521.7 814.3 1528.5 823.0 1535.6 833.9 C1542.7 844.8 1551.1 858.7 1556.9 871.5 C1562.6 884.3 1567.2 898.7 1569.9 910.7 C1572.7 922.7 1573.5 931.9 1573.2 943.4 C1572.9 954.9 1569.1 973.9 1568.3 980.0" fill="none" stroke="#1a1a1a" stroke-width="1.35" />
<path d="M1498.0 789.8 C1505.7 797.2 1532.9 819.2 1543.8 833.9 C1554.7 848.6 1558.0 862.5 1563.4 878.0 C1568.8 893.6 1575.1 913.4 1576.5 927.1 C1577.8 940.7 1572.4 954.3 1571.6 959.7" fill="none" stroke="#1a1a1a" stroke-width="1.35" />
<ellipse cx="1480.9" cy="793.9" rx="5.7" ry="8.2" transform="rotate(-15 1480.9 793.9)" fill="none" stroke="#1a1a1a" stroke-width="1.35"/>
<ellipse cx="1480.4" cy="794.4" rx="3.0" ry="5.0" transform="rotate(-15 1480.4 794.4)" fill="none" stroke="#1a1a1a" stroke-width="1.35"/>
<path d="M1534.0 833.9 L1543.8 830.7 L1547.1 835.6" fill="none" stroke="#1a1a1a" stroke-width="1.35" />
<path d="M1427.8 837.2 C1430.0 834.7 1435.1 826.3 1440.8 822.5 C1446.6 818.7 1454.7 815.1 1462.1 814.3 C1469.4 813.5 1477.3 814.3 1485.0 817.6 C1492.6 820.8 1500.2 826.0 1507.8 833.9 C1515.5 841.8 1524.5 853.5 1530.7 865.0 C1537.0 876.4 1542.2 890.8 1545.4 902.5 C1548.7 914.3 1550.1 926.2 1550.3 935.2 C1550.6 944.2 1547.6 952.9 1547.1 956.5" fill="none" stroke="#1a1a1a" stroke-width="1.35" />
<path d="M1431.0 838.8 L1447.4 829.0 L1455.6 848.6 L1453.9 856.8 L1458.8 861.7 L1462.1 858.4 L1457.2 848.6 L1456.4 829.0 L1463.7 824.1 L1468.6 829.0 L1480.1 823.3 L1485.0 845.4 L1478.4 850.3 L1476.8 861.7 L1485.0 865.0" fill="none" stroke="#1a1a1a" stroke-width="1.35" />
<path d="M1485.0 865.0 L1496.4 842.1 L1501.3 845.4 L1512.7 840.5 L1512.7 851.9 L1504.6 861.7 L1498.0 866.6 L1494.8 874.8 L1501.3 884.6" fill="none" stroke="#1a1a1a" stroke-width="1.35" />
<path d="M1501.3 884.6 L1506.2 879.7 L1524.2 873.1 L1527.5 881.3 L1537.3 878.0 L1534.0 884.6 L1514.4 894.4 L1506.2 897.6 L1507.8 907.5" fill="none" stroke="#1a1a1a" stroke-width="1.35" />
<path d="M1507.8 907.5 L1520.9 904.2 L1530.7 909.1 L1537.3 918.9 L1547.1 915.6 L1543.8 922.2 L1530.7 925.4 L1517.6 922.2 L1511.1 923.8" fill="none" stroke="#1a1a1a" stroke-width="1.35" />
<path d="M1511.1 923.8 L1514.4 930.3 L1524.2 936.9 L1540.5 953.2 L1530.7 961.4 L1520.9 953.2" fill="none" stroke="#1a1a1a" stroke-width="1.35" />
<path d="M1504.6 943.4 L1514.4 956.5 L1517.6 976.1" fill="none" stroke="#1a1a1a" stroke-width="1.35" />
<path d="M1449.0 959.7 L1457.2 969.5 L1468.6 956.5" fill="none" stroke="#1a1a1a" stroke-width="1.35" />
<path d="M1431.0 838.8 L1434.3 858.4 L1442.5 871.5" fill="none" stroke="#1a1a1a" stroke-width="1.35" />
<path d="M1437.6 833.9 L1444.1 851.9 L1449.0 868.2" fill="none" stroke="#1a1a1a" stroke-width="1.35" />
<path d="M1468.6 829.0 L1473.5 848.6 L1476.8 861.7" fill="none" stroke="#1a1a1a" stroke-width="1.35" />
<path d="M1496.4 842.1 L1491.5 856.8" fill="none" stroke="#1a1a1a" stroke-width="1.35" />
<path d="M1400.0 789.8 C1402.7 793.6 1412.5 805.6 1416.3 812.7 C1420.2 819.8 1422.3 826.3 1422.9 832.3 C1423.4 838.3 1420.2 845.9 1419.6 848.6" fill="none" stroke="#1a1a1a" stroke-width="1.35" />
<path d="M1403.3 780.0 L1409.8 815.9 L1400.0 838.8" fill="none" stroke="#1a1a1a" stroke-width="1.35" />
<path d="M1431.0 780.0 L1409.8 815.9" fill="none" stroke="#1a1a1a" stroke-width="1.35" />
<path d="M1424.5 796.3 L1437.6 825.8" fill="none" stroke="#1a1a1a" stroke-width="1.35" />
<path d="M1431.0 784.9 L1453.9 807.8" fill="none" stroke="#1a1a1a" stroke-width="1.35" />
<path d="M1659.8 920.5 L1604.2 945.0 L1568.3 961.4" fill="none" stroke="#1a1a1a" stroke-width="1.35" />
<path d="M1604.2 945.0 L1610.8 972.8 L1599.3 980.0" fill="none" stroke="#1a1a1a" stroke-width="1.35" />
<path d="M1645.1 927.1 L1605.9 976.1" fill="none" stroke="#1a1a1a" stroke-width="1.35" />
<path d="M1628.8 936.9 L1610.8 972.8" fill="none" stroke="#1a1a1a" stroke-width="1.35" />
<path d="M1427.1 775.8 L1455.8 804.4 L1466.8 782.4" fill="none" stroke="#1a1a1a" stroke-width="1.35" />
<path d="M1387.4 769.1 C1390.3 768.8 1399.1 765.8 1405.0 766.9 C1410.9 768.0 1417.5 769.5 1422.7 775.8 C1427.8 782.0 1433.0 796.0 1435.9 804.4 C1438.8 812.9 1439.6 822.8 1440.3 826.5" fill="none" stroke="#1a1a1a" stroke-width="1.35" />
<path d="M1551.9 1017.6 L1542.1 1012.7 L1537.2 1004.5 L1566.6 993.9 L1615.6 1015.1 L1615.6 1029.0 L1602.5 1033.9 L1602.5 1020.8 L1566.6 1004.5" fill="none" stroke="#1a1a1a" stroke-width="1.35" />
<path d="M1602.5 1020.8 L1615.6 1015.1" fill="none" stroke="#1a1a1a" stroke-width="1.35" />
<path d="M1561.7 1009.4 C1562.2 1007.0 1563.3 1006.3 1565.0 1006.1 C1566.6 1006.0 1570.1 1005.6 1571.5 1008.6 C1572.9 1011.6 1573.7 1021.3 1573.1 1024.1 C1572.6 1027.0 1570.1 1026.3 1568.2 1025.8 C1566.3 1025.2 1562.8 1023.6 1561.7 1020.8 C1560.6 1018.1 1561.2 1011.9 1561.7 1009.4Z" fill="none" stroke="#1a1a1a" stroke-width="1.35" />
<ellipse cx="1566.6" cy="1014.3" rx="3.0" ry="4.2" transform="rotate(10 1566.6 1014.3)" fill="none" stroke="#1a1a1a" stroke-width="1.35"/>
<ellipse cx="1609.1" cy="1024.1" rx="3.3" ry="4.6" transform="rotate(20 1609.1 1024.1)" fill="none" stroke="#1a1a1a" stroke-width="1.35"/>
<path d="M1520.8 1025.8 C1521.9 1024.9 1524.4 1021.5 1527.4 1020.8 C1530.4 1020.2 1536.4 1020.6 1538.8 1021.7 C1541.3 1022.8 1541.5 1024.3 1542.1 1027.4 C1542.6 1030.5 1542.1 1038.3 1542.1 1040.5" fill="none" stroke="#1a1a1a" stroke-width="1.35" />
<ellipse cx="1532.3" cy="1024.9" rx="8.0" ry="4.0" transform="rotate(0 1532.3 1024.9)" fill="none" stroke="#1a1a1a" stroke-width="1.35"/>
<path d="M1530.7 1043.7 L1542.1 1038.8 L1547.0 1042.1 L1545.4 1055.2 L1533.9 1058.4 L1530.7 1043.7" fill="none" stroke="#1a1a1a" stroke-width="1.35" />
<path d="M1520.8 1025.8 L1522.5 1037.2 L1530.7 1043.7" fill="none" stroke="#1a1a1a" stroke-width="1.35" />
<ellipse cx="1538.8" cy="1049.4" rx="3.6" ry="5.0" transform="rotate(20 1538.8 1049.4)" fill="none" stroke="#1a1a1a" stroke-width="1.35"/>
<path d="M1551.9 1025.8 C1555.2 1029.0 1566.1 1038.0 1571.5 1045.4 C1576.9 1052.7 1581.3 1061.7 1584.6 1069.9 C1587.8 1078.0 1590.3 1086.8 1591.1 1094.4 C1591.9 1102.0 1591.1 1108.5 1589.5 1115.6 C1587.8 1122.7 1586.5 1131.1 1581.3 1136.9 C1576.1 1142.6 1562.2 1147.8 1558.4 1149.9" fill="none" stroke="#1a1a1a" stroke-width="1.35" />
<path d="M1600.9 1033.9 C1602.5 1038.0 1608.5 1050.5 1610.7 1058.4 C1612.9 1066.3 1614.0 1073.1 1614.0 1081.3 C1614.0 1089.5 1612.6 1099.8 1610.7 1107.5 C1608.8 1115.1 1603.9 1123.8 1602.5 1127.1" fill="none" stroke="#1a1a1a" stroke-width="1.35" />
<path d="M1571.5 1045.4 L1589.5 1038.0" fill="none" stroke="#1a1a1a" stroke-width="1.35" />
<path d="M1579.7 1061.7 L1600.9 1051.9" fill="none" stroke="#1a1a1a" stroke-width="1.35" />
<path d="M1587.8 1092.7 L1610.7 1081.3" fill="none" stroke="#1a1a1a" stroke-width="1.35" />
<path d="M1592.7 1105.8 L1609.1 1097.6" fill="none" stroke="#1a1a1a" stroke-width="1.35" />
<path d="M1584.6 1076.4 L1609.1 1066.6" fill="none" stroke="#1a1a1a" stroke-width="1.35" />
<path d="M1584.6 1123.8 L1602.5 1117.3" fill="none" stroke="#1a1a1a" stroke-width="1.35" />
<path d="M1609.1 1035.6 C1611.0 1039.4 1618.1 1050.3 1620.5 1058.4 C1623.0 1066.6 1623.8 1075.9 1623.8 1084.6 C1623.8 1093.3 1622.7 1103.1 1620.5 1110.7 C1618.3 1118.3 1612.4 1127.1 1610.7 1130.3" fill="none" stroke="#1a1a1a" stroke-width="1.35" />
<path d="M1605.8 1004.5 C1608.0 1004.2 1614.0 1001.0 1618.9 1002.9 C1623.8 1004.8 1632.0 1011.9 1635.2 1015.9 C1638.5 1020.0 1638.5 1024.4 1638.5 1027.4 C1638.5 1030.4 1634.1 1030.9 1635.2 1033.9 C1636.3 1036.9 1642.9 1041.5 1645.0 1045.4 C1647.2 1049.2 1646.4 1054.1 1648.3 1056.8 C1650.2 1059.5 1654.8 1059.2 1656.5 1061.7 C1658.1 1064.2 1658.9 1068.8 1658.1 1071.5 C1657.3 1074.2 1652.9 1074.2 1651.6 1078.0 C1650.2 1081.9 1651.3 1088.4 1649.9 1094.4 C1648.6 1100.4 1647.2 1108.5 1643.4 1114.0 C1639.6 1119.4 1632.5 1124.1 1627.1 1127.1 C1621.6 1130.1 1613.4 1131.1 1610.7 1132.0" fill="none" stroke="#1a1a1a" stroke-width="1.35" />
<ellipse cx="1641.8" cy="1040.5" rx="3.5" ry="6.0" transform="rotate(-20 1641.8 1040.5)" fill="none" stroke="#1a1a1a" stroke-width="1.35"/>
<ellipse cx="1653.2" cy="1089.5" rx="2.5" ry="5.0" transform="rotate(-20 1653.2 1089.5)" fill="none" stroke="#1a1a1a" stroke-width="1.35"/>
<path d="M1576.4 1141.8 L1586.2 1136.9 L1609.1 1140.1 L1609.1 1158.1 L1592.7 1164.6 L1592.7 1149.9 L1576.4 1141.8" fill="none" stroke="#1a1a1a" stroke-width="1.35" />
<path d="M1592.7 1149.9 L1609.1 1140.1" fill="none" stroke="#1a1a1a" stroke-width="1.35" />
<ellipse cx="1600.1" cy="1154.0" rx="3.3" ry="4.2" transform="rotate(20 1600.1 1154.0)" fill="none" stroke="#1a1a1a" stroke-width="1.35"/>
<path d="M1600.9 1123.8 L1602.5 1136.9" fill="none" stroke="#1a1a1a" stroke-width="1.35" />
<path d="M1542.1 1084.6 L1543.7 1146.7 L1553.5 1151.6 L1551.9 1094.4" fill="none" stroke="#1a1a1a" stroke-width="1.35" />
<path d="M1547.0 1094.4 L1548.6 1143.4" fill="none" stroke="#1a1a1a" stroke-width="1.35" />
<path d="M1533.9 1074.8 C1535.8 1075.9 1542.1 1079.4 1545.4 1081.3 C1548.6 1083.2 1552.4 1084.0 1553.5 1086.2 C1554.6 1088.4 1552.2 1093.0 1551.9 1094.4" fill="none" stroke="#1a1a1a" stroke-width="1.35" />
<path d="M1558.4 1149.9 L1592.7 1164.6" fill="none" stroke="#1a1a1a" stroke-width="1.35" />
<path d="M1560.1 1159.7 L1584.6 1174.4" fill="none" stroke="#1a1a1a" stroke-width="1.35" />
<path d="M1527.4 1180.0 L1527.4 1171.2 L1538.8 1166.3 L1540.5 1180.0" fill="none" stroke="#1a1a1a" stroke-width="1.35" />
<path d="M1519.2 1015.9 L1535.6 1004.5 L1627.1 973.5" fill="none" stroke="#1a1a1a" stroke-width="1.35" />
<path d="M1535.6 1004.5 L1545.4 980.0" fill="none" stroke="#1a1a1a" stroke-width="1.35" />
<path d="M1529.0 1058.4 L1535.6 1071.5 L1533.9 1084.6 L1538.8 1143.4 L1533.9 1159.7" fill="none" stroke="#1a1a1a" stroke-width="1.35" />
<path d="M1521.9 1011.5 L1541.8 1002.7 L1572.7 993.8" fill="none" stroke="#1a1a1a" stroke-width="1.35" />
<path d="M1521.9 1020.3 L1528.6 1004.9" fill="none" stroke="#1a1a1a" stroke-width="1.35" />
<path d="M1506.5 923.2 C1507.6 925.4 1509.4 931.3 1513.1 936.5 C1516.8 941.6 1524.5 951.9 1528.6 954.1 C1532.6 956.3 1535.9 950.4 1537.4 949.7" fill="none" stroke="#1a1a1a" stroke-width="1.35" />
<path d="M1510.9 965.2 L1528.6 976.2 L1550.6 980.6 L1563.9 971.8 L1550.6 954.1" fill="none" stroke="#1a1a1a" stroke-width="1.35" />
<path d="M1550.6 980.6 L1528.6 1007.1" fill="none" stroke="#1a1a1a" stroke-width="1.35" />
<path d="M1563.9 971.8 L1603.6 954.1" fill="none" stroke="#1a1a1a" stroke-width="1.35" />
<path d="M1301.5 977.6 C1303.2 978.3 1308.2 980.3 1311.5 981.9 C1314.7 983.6 1317.9 985.4 1321.0 987.4 C1324.1 989.4 1327.1 991.6 1330.0 994.0 C1332.8 996.3 1335.6 998.9 1338.3 1001.5 C1340.9 1004.2 1343.4 1007.1 1345.8 1010.0 C1348.2 1013.0 1350.4 1016.2 1352.5 1019.4 C1354.6 1022.6 1356.6 1026.0 1358.3 1029.5 C1360.1 1033.0 1361.7 1036.6 1363.2 1040.2 C1364.6 1043.9 1365.9 1047.7 1367.0 1051.5 C1368.1 1055.3 1369.0 1059.2 1369.8 1063.1 C1370.5 1067.0 1371.1 1071.0 1371.4 1075.0 C1371.8 1079.0 1372.0 1083.0 1372.0 1087.0 C1372.0 1091.0 1371.8 1095.0 1371.4 1099.0 C1371.1 1103.0 1370.5 1107.0 1369.8 1110.9 C1369.0 1114.8 1368.1 1118.7 1367.0 1122.5 C1365.9 1126.3 1364.6 1130.1 1363.2 1133.8 C1361.7 1137.4 1360.1 1141.0 1358.3 1144.5 C1356.6 1148.0 1354.6 1151.4 1352.5 1154.6 C1350.4 1157.8 1348.2 1161.0 1345.8 1164.0 C1343.4 1166.9 1340.9 1169.8 1338.3 1172.5 C1335.6 1175.1 1332.8 1177.7 1330.0 1180.0 C1327.1 1182.4 1322.5 1185.5 1321.0 1186.6" fill="none" stroke="#1a1a1a" stroke-width="1.35" />
<path d="M1304.9 975.1 C1306.6 975.9 1311.8 977.9 1315.1 979.6 C1318.4 981.2 1321.7 983.1 1324.8 985.2 C1327.9 987.2 1331.0 989.5 1333.9 991.9 C1336.8 994.4 1339.7 997.0 1342.4 999.7 C1345.1 1002.5 1347.6 1005.4 1350.1 1008.5 C1352.5 1011.6 1354.8 1014.8 1356.9 1018.1 C1359.0 1021.4 1361.0 1024.9 1362.8 1028.5 C1364.6 1032.1 1366.3 1035.8 1367.8 1039.5 C1369.2 1043.3 1370.5 1047.2 1371.7 1051.1 C1372.8 1055.0 1373.7 1059.0 1374.5 1063.1 C1375.2 1067.1 1375.8 1071.2 1376.2 1075.3 C1376.6 1079.4 1376.8 1083.5 1376.8 1087.7 C1376.8 1091.8 1376.6 1095.9 1376.2 1100.0 C1375.8 1104.1 1375.2 1108.2 1374.5 1112.3 C1373.7 1116.3 1372.8 1120.3 1371.7 1124.2 C1370.5 1128.2 1369.2 1132.0 1367.8 1135.8 C1366.3 1139.6 1364.6 1143.3 1362.8 1146.8 C1361.0 1150.4 1359.0 1153.9 1356.9 1157.2 C1354.8 1160.6 1352.5 1163.8 1350.1 1166.8 C1347.6 1169.9 1345.1 1172.8 1342.4 1175.6 C1339.7 1178.4 1336.8 1181.0 1333.9 1183.4 C1331.0 1185.8 1326.3 1189.0 1324.8 1190.1" fill="none" stroke="#1a1a1a" stroke-width="1.35" />
<path d="M1308.4 972.6 C1310.1 973.4 1315.3 975.5 1318.7 977.2 C1322.1 978.9 1325.4 980.8 1328.6 983.0 C1331.8 985.1 1334.9 987.4 1337.9 989.9 C1340.9 992.4 1343.7 995.1 1346.5 997.9 C1349.2 1000.8 1351.8 1003.8 1354.3 1006.9 C1356.8 1010.1 1359.1 1013.4 1361.3 1016.8 C1363.5 1020.2 1365.5 1023.8 1367.3 1027.5 C1369.2 1031.2 1370.9 1035.0 1372.4 1038.8 C1373.9 1042.7 1375.2 1046.7 1376.3 1050.7 C1377.5 1054.8 1378.4 1058.9 1379.2 1063.0 C1380.0 1067.2 1380.5 1071.4 1380.9 1075.6 C1381.3 1079.8 1381.5 1084.1 1381.5 1088.3 C1381.5 1092.6 1381.3 1096.8 1380.9 1101.1 C1380.5 1105.3 1380.0 1109.5 1379.2 1113.6 C1378.4 1117.8 1377.5 1121.9 1376.3 1125.9 C1375.2 1130.0 1373.9 1133.9 1372.4 1137.8 C1370.9 1141.7 1369.2 1145.5 1367.3 1149.2 C1365.5 1152.8 1363.5 1156.4 1361.3 1159.8 C1359.1 1163.3 1356.8 1166.6 1354.3 1169.7 C1351.8 1172.9 1349.2 1175.9 1346.5 1178.7 C1343.7 1181.6 1340.9 1184.3 1337.9 1186.8 C1334.9 1189.3 1330.1 1192.5 1328.6 1193.7" fill="none" stroke="#1a1a1a" stroke-width="1.35" />
<path d="M1311.8 970.1 C1313.6 970.9 1318.9 973.0 1322.3 974.8 C1325.8 976.6 1329.1 978.6 1332.4 980.7 C1335.6 982.9 1338.8 985.3 1341.8 987.9 C1344.9 990.4 1347.8 993.2 1350.6 996.1 C1353.4 999.0 1356.1 1002.1 1358.6 1005.4 C1361.1 1008.6 1363.5 1012.0 1365.7 1015.5 C1367.9 1019.1 1369.9 1022.7 1371.8 1026.5 C1373.7 1030.3 1375.4 1034.2 1376.9 1038.2 C1378.5 1042.1 1379.8 1046.2 1381.0 1050.4 C1382.1 1054.5 1383.1 1058.8 1383.9 1063.0 C1384.7 1067.3 1385.3 1071.6 1385.7 1075.9 C1386.1 1080.3 1386.2 1084.6 1386.2 1089.0 C1386.2 1093.4 1386.1 1097.7 1385.7 1102.1 C1385.3 1106.4 1384.7 1110.7 1383.9 1115.0 C1383.1 1119.2 1382.1 1123.5 1381.0 1127.6 C1379.8 1131.8 1378.5 1135.9 1376.9 1139.8 C1375.4 1143.8 1373.7 1147.7 1371.8 1151.5 C1369.9 1155.3 1367.9 1158.9 1365.7 1162.5 C1363.5 1166.0 1361.1 1169.4 1358.6 1172.6 C1356.1 1175.9 1353.4 1179.0 1350.6 1181.9 C1347.8 1184.8 1344.9 1187.6 1341.8 1190.1 C1338.8 1192.7 1334.0 1196.1 1332.4 1197.3" fill="none" stroke="#1a1a1a" stroke-width="1.35" />
<path d="M1315.2 967.6 C1317.0 968.4 1322.4 970.6 1325.9 972.4 C1329.4 974.2 1332.9 976.3 1336.2 978.5 C1339.5 980.8 1342.7 983.2 1345.8 985.8 C1348.9 988.5 1351.9 991.3 1354.7 994.3 C1357.6 997.3 1360.3 1000.5 1362.8 1003.8 C1365.4 1007.1 1367.8 1010.6 1370.1 1014.2 C1372.3 1017.9 1374.4 1021.6 1376.3 1025.5 C1378.2 1029.4 1380.0 1033.4 1381.5 1037.5 C1383.1 1041.6 1384.5 1045.8 1385.6 1050.0 C1386.8 1054.3 1387.8 1058.6 1388.6 1063.0 C1389.4 1067.4 1390.0 1071.8 1390.4 1076.3 C1390.8 1080.7 1391.0 1085.2 1391.0 1089.7 C1391.0 1094.1 1390.8 1098.6 1390.4 1103.1 C1390.0 1107.5 1389.4 1112.0 1388.6 1116.3 C1387.8 1120.7 1386.8 1125.1 1385.6 1129.3 C1384.5 1133.6 1383.1 1137.8 1381.5 1141.9 C1380.0 1145.9 1378.2 1150.0 1376.3 1153.8 C1374.4 1157.7 1372.3 1161.5 1370.1 1165.1 C1367.8 1168.7 1365.4 1172.2 1362.8 1175.5 C1360.3 1178.9 1357.6 1182.0 1354.7 1185.0 C1351.9 1188.0 1348.9 1190.9 1345.8 1193.5 C1342.7 1196.1 1337.8 1199.6 1336.2 1200.8" fill="none" stroke="#1a1a1a" stroke-width="1.35" />
<path d="M1318.6 965.1 C1320.5 965.9 1326.0 968.2 1329.6 970.0 C1333.1 971.9 1336.6 974.0 1340.0 976.3 C1343.3 978.6 1346.6 981.1 1349.8 983.8 C1352.9 986.5 1355.9 989.4 1358.8 992.5 C1361.7 995.6 1364.5 998.8 1367.1 1002.2 C1369.7 1005.6 1372.2 1009.2 1374.4 1012.9 C1376.7 1016.7 1378.9 1020.5 1380.8 1024.5 C1382.7 1028.5 1384.5 1032.6 1386.1 1036.8 C1387.7 1041.0 1389.1 1045.3 1390.3 1049.6 C1391.5 1054.0 1392.5 1058.5 1393.3 1063.0 C1394.1 1067.4 1394.7 1072.0 1395.1 1076.6 C1395.5 1081.1 1395.8 1085.7 1395.8 1090.3 C1395.8 1094.9 1395.5 1099.5 1395.1 1104.1 C1394.7 1108.7 1394.1 1113.2 1393.3 1117.7 C1392.5 1122.2 1391.5 1126.7 1390.3 1131.0 C1389.1 1135.4 1387.7 1139.7 1386.1 1143.9 C1384.5 1148.1 1382.7 1152.2 1380.8 1156.2 C1378.9 1160.1 1376.7 1164.0 1374.4 1167.7 C1372.2 1171.4 1369.7 1175.0 1367.1 1178.4 C1364.5 1181.8 1361.7 1185.1 1358.8 1188.2 C1355.9 1191.3 1352.9 1194.2 1349.8 1196.9 C1346.6 1199.6 1341.6 1203.1 1340.0 1204.4" fill="none" stroke="#1a1a1a" stroke-width="1.35" />
<path d="M1322.1 962.6 C1323.9 963.5 1329.6 965.8 1333.2 967.7 C1336.8 969.6 1340.3 971.7 1343.8 974.1 C1347.2 976.4 1350.5 979.0 1353.7 981.8 C1356.9 984.5 1360.0 987.5 1362.9 990.7 C1365.9 993.8 1368.7 997.2 1371.3 1000.7 C1374.0 1004.2 1376.5 1007.8 1378.8 1011.6 C1381.1 1015.5 1383.3 1019.4 1385.3 1023.5 C1387.3 1027.6 1389.1 1031.8 1390.7 1036.1 C1392.3 1040.4 1393.7 1044.8 1394.9 1049.3 C1396.2 1053.8 1397.2 1058.3 1398.0 1062.9 C1398.8 1067.5 1399.5 1072.2 1399.9 1076.9 C1400.3 1081.6 1400.5 1086.3 1400.5 1091.0 C1400.5 1095.7 1400.3 1100.4 1399.9 1105.1 C1399.5 1109.8 1398.8 1114.5 1398.0 1119.1 C1397.2 1123.7 1396.2 1128.2 1394.9 1132.7 C1393.7 1137.2 1392.3 1141.6 1390.7 1145.9 C1389.1 1150.2 1387.3 1154.4 1385.3 1158.5 C1383.3 1162.6 1381.1 1166.5 1378.8 1170.4 C1376.5 1174.2 1374.0 1177.8 1371.3 1181.3 C1368.7 1184.8 1365.9 1188.2 1362.9 1191.3 C1360.0 1194.5 1356.9 1197.5 1353.7 1200.2 C1350.5 1203.0 1345.4 1206.6 1343.8 1207.9" fill="none" stroke="#1a1a1a" stroke-width="1.35" />
<path d="M1189.2 976.2 C1190.3 974.0 1204.1 969.9 1212.4 969.6 C1220.7 969.2 1230.8 971.4 1238.9 974.0 C1247.0 976.6 1255.1 980.2 1260.9 985.0 C1266.8 989.8 1272.5 997.9 1274.2 1002.7 C1275.8 1007.4 1275.3 1015.2 1270.9 1013.7 C1266.5 1012.2 1256.0 998.8 1247.7 993.8 C1239.4 988.9 1228.2 985.7 1221.2 983.9 C1214.2 982.1 1211.1 984.1 1205.8 982.8 C1200.5 981.5 1188.1 978.4 1189.2 976.2Z" fill="#555" stroke="#1a1a1a" stroke-width="1" />
<path d="M1214.6 972.9 L1223.4 989.4" fill="none" stroke="#ddd" stroke-width="1.2" />
<path d="M1223.4 976.0 L1232.7 994.3" fill="none" stroke="#ddd" stroke-width="1.2" />
<path d="M1232.3 979.1 L1242.0 999.1" fill="none" stroke="#ddd" stroke-width="1.2" />
<path d="M1241.1 982.1 L1251.2 1004.0" fill="none" stroke="#ddd" stroke-width="1.2" />
<path d="M1249.9 985.2 L1260.5 1008.8" fill="none" stroke="#ddd" stroke-width="1.2" />
<path d="M1258.7 988.3 L1269.8 1013.7" fill="none" stroke="#ddd" stroke-width="1.2" />
<ellipse cx="1206.0" cy="1082.0" rx="79.0" ry="108.0" transform="rotate(-10 1206.0 1082.0)" fill="#fff" stroke="#1a1a1a" stroke-width="1.6"/>
<ellipse cx="1208.0" cy="1082.0" rx="73.0" ry="102.0" transform="rotate(-10 1208.0 1082.0)" fill="none" stroke="#1a1a1a" stroke-width="1.35"/>
<ellipse cx="1228.0" cy="1078.0" rx="59.0" ry="92.0" transform="rotate(-10 1228.0 1078.0)" fill="none" stroke="#1a1a1a" stroke-width="1.35"/>
<ellipse cx="1231.0" cy="1078.0" rx="55.0" ry="88.0" transform="rotate(-10 1231.0 1078.0)" fill="none" stroke="#1a1a1a" stroke-width="1.35"/>
<ellipse cx="1238.0" cy="1076.0" rx="49.0" ry="83.0" transform="rotate(-10 1238.0 1076.0)" fill="none" stroke="#1a1a1a" stroke-width="1.35"/>
<ellipse cx="1250.0" cy="1069.0" rx="37.5" ry="72.0" transform="rotate(-10 1250.0 1069.0)" fill="none" stroke="#1a1a1a" stroke-width="1.35"/>
<ellipse cx="1267.6" cy="1073.0" rx="28.7" ry="48.5" transform="rotate(-10 1267.6 1073.0)" fill="none" stroke="#1a1a1a" stroke-width="1.35"/>
<ellipse cx="1232.3" cy="1018.1" rx="4.0" ry="6.0" transform="rotate(-25 1232.3 1018.1)" fill="none" stroke="#1a1a1a" stroke-width="1.35"/>
<ellipse cx="1226.7" cy="1042.4" rx="4.0" ry="6.0" transform="rotate(-25 1226.7 1042.4)" fill="none" stroke="#1a1a1a" stroke-width="1.35"/>
<ellipse cx="1232.3" cy="1073.3" rx="4.0" ry="6.0" transform="rotate(-25 1232.3 1073.3)" fill="none" stroke="#1a1a1a" stroke-width="1.35"/>
<ellipse cx="1247.7" cy="1099.7" rx="4.0" ry="6.0" transform="rotate(-25 1247.7 1099.7)" fill="none" stroke="#1a1a1a" stroke-width="1.35"/>
<ellipse cx="1269.8" cy="1115.2" rx="4.0" ry="6.0" transform="rotate(-25 1269.8 1115.2)" fill="none" stroke="#1a1a1a" stroke-width="1.35"/>
<ellipse cx="1198.0" cy="880.0" rx="64.0" ry="85.0" transform="rotate(-12 1198.0 880.0)" fill="#fff" stroke="#1a1a1a" stroke-width="1.5"/>
<ellipse cx="1200.0" cy="880.0" rx="59.0" ry="80.0" transform="rotate(-12 1200.0 880.0)" fill="none" stroke="#1a1a1a" stroke-width="1.35"/>
<ellipse cx="1203.0" cy="880.0" rx="54.0" ry="75.0" transform="rotate(-12 1203.0 880.0)" fill="none" stroke="#1a1a1a" stroke-width="1.35"/>
<ellipse cx="1207.0" cy="880.0" rx="49.0" ry="70.0" transform="rotate(-12 1207.0 880.0)" fill="none" stroke="#1a1a1a" stroke-width="1.35"/>
<ellipse cx="1206.0" cy="882.0" rx="33.0" ry="52.0" transform="rotate(-12 1206.0 882.0)" fill="none" stroke="#1a1a1a" stroke-width="1.35"/>
<ellipse cx="1204.0" cy="883.0" rx="28.0" ry="46.0" transform="rotate(-12 1204.0 883.0)" fill="none" stroke="#1a1a1a" stroke-width="1.35"/>
<ellipse cx="1202.0" cy="884.0" rx="22.0" ry="38.0" transform="rotate(-12 1202.0 884.0)" fill="none" stroke="#1a1a1a" stroke-width="1.35"/>
<ellipse cx="1198.0" cy="886.0" rx="17.0" ry="28.0" transform="rotate(-12 1198.0 886.0)" fill="none" stroke="#1a1a1a" stroke-width="1.35"/>
<ellipse cx="1195.0" cy="888.0" rx="13.0" ry="22.0" transform="rotate(-12 1195.0 888.0)" fill="none" stroke="#1a1a1a" stroke-width="1.6"/>
<path d="M1016.0 836.4 C1020.8 834.4 1035.5 826.3 1044.7 824.3 C1053.9 822.3 1062.4 822.1 1071.2 824.3 C1080.0 826.5 1090.0 831.3 1097.7 837.5 C1105.4 843.8 1113.1 855.9 1117.5 861.8 C1121.9 867.7 1123.1 871.0 1124.2 872.8" fill="none" stroke="#1a1a1a" stroke-width="1.35" />
<path d="M1053.6 839.7 C1056.5 838.6 1064.6 832.4 1071.2 833.1 C1077.8 833.9 1087.0 839.4 1093.3 844.2 C1099.5 848.9 1104.7 855.9 1108.7 861.8 C1112.8 867.7 1115.3 872.8 1117.5 879.5 C1119.7 886.1 1121.2 897.8 1121.9 901.5" fill="none" stroke="#1a1a1a" stroke-width="1.35" />
<ellipse cx="1051.0" cy="910.0" rx="60.0" ry="77.0" transform="rotate(-10 1051.0 910.0)" fill="#fff" stroke="#1a1a1a" stroke-width="1.7"/>
<ellipse cx="1053.0" cy="911.0" rx="54.0" ry="71.0" transform="rotate(-10 1053.0 911.0)" fill="none" stroke="#1a1a1a" stroke-width="1.35"/>
<ellipse cx="1055.0" cy="912.0" rx="49.0" ry="66.0" transform="rotate(-10 1055.0 912.0)" fill="none" stroke="#1a1a1a" stroke-width="1.35"/>
<ellipse cx="1057.0" cy="913.0" rx="42.0" ry="58.0" transform="rotate(-10 1057.0 913.0)" fill="none" stroke="#1a1a1a" stroke-width="1.35"/>
<path d="M1027.4 857.6 C1028.7 854.6 1037.7 851.9 1042.1 851.0 C1046.4 850.2 1051.9 848.9 1053.5 852.7 C1055.2 856.5 1053.3 870.1 1051.9 873.9 C1050.5 877.7 1048.4 876.4 1045.4 875.6 C1042.4 874.7 1036.9 872.0 1033.9 869.0 C1030.9 866.0 1026.0 860.6 1027.4 857.6Z" fill="none" stroke="#1a1a1a" stroke-width="1.35" />
<path d="M1031.6 859.2 C1032.6 857.0 1039.0 855.1 1042.2 854.5 C1045.3 853.9 1049.2 852.9 1050.4 855.7 C1051.6 858.4 1050.2 868.2 1049.2 870.9 C1048.2 873.7 1046.7 872.7 1044.5 872.1 C1042.4 871.5 1038.4 869.6 1036.3 867.4 C1034.1 865.3 1030.6 861.3 1031.6 859.2Z" fill="none" stroke="#1a1a1a" stroke-width="1.35" />
<path d="M1017.6 877.2 C1018.9 874.2 1020.8 874.7 1024.1 880.5 C1027.4 886.2 1035.6 902.8 1037.2 911.5 C1038.8 920.2 1035.6 929.5 1033.9 932.7 C1032.3 936.0 1030.4 936.8 1027.4 931.1 C1024.4 925.4 1017.6 907.4 1015.9 898.4 C1014.3 889.4 1016.2 880.2 1017.6 877.2Z" fill="none" stroke="#1a1a1a" stroke-width="1.35" />
<path d="M1019.9 885.0 C1020.9 882.9 1022.3 883.3 1024.7 887.4 C1027.0 891.5 1032.9 903.5 1034.1 909.7 C1035.2 916.0 1032.9 922.7 1031.7 925.0 C1030.5 927.4 1029.2 928.0 1027.0 923.9 C1024.8 919.7 1019.9 906.8 1018.8 900.3 C1017.6 893.9 1019.0 887.2 1019.9 885.0Z" fill="none" stroke="#1a1a1a" stroke-width="1.35" />
<path d="M1042.1 937.6 C1042.4 933.0 1049.7 928.7 1053.5 927.8 C1057.3 927.0 1060.9 927.3 1065.0 932.7 C1069.1 938.2 1076.9 955.1 1078.0 960.5 C1079.1 966.0 1075.9 966.2 1071.5 965.4 C1067.1 964.6 1056.8 960.3 1051.9 955.6 C1047.0 951.0 1041.8 942.3 1042.1 937.6Z" fill="none" stroke="#1a1a1a" stroke-width="1.35" />
<path d="M1047.2 940.2 C1047.4 936.8 1052.7 933.7 1055.4 933.1 C1058.2 932.5 1060.7 932.7 1063.7 936.6 C1066.6 940.6 1072.3 952.7 1073.1 956.6 C1073.9 960.6 1071.5 960.8 1068.4 960.2 C1065.2 959.6 1057.8 956.4 1054.3 953.1 C1050.7 949.8 1047.0 943.5 1047.2 940.2Z" fill="none" stroke="#1a1a1a" stroke-width="1.35" />
<path d="M1078.0 918.0 C1079.1 913.1 1087.8 910.4 1091.1 911.5 C1094.4 912.6 1097.1 919.1 1097.6 924.6 C1098.2 930.0 1096.6 941.5 1094.4 944.2 C1092.2 946.9 1087.3 945.3 1084.6 940.9 C1081.9 936.6 1076.9 922.9 1078.0 918.0Z" fill="none" stroke="#1a1a1a" stroke-width="1.35" />
<path d="M1081.2 920.8 C1081.9 917.3 1088.2 915.3 1090.6 916.1 C1092.9 916.9 1094.9 921.6 1095.3 925.5 C1095.7 929.4 1094.5 937.6 1092.9 939.6 C1091.3 941.6 1087.8 940.4 1085.9 937.3 C1083.9 934.1 1080.4 924.3 1081.2 920.8Z" fill="none" stroke="#1a1a1a" stroke-width="1.35" />
<path d="M1068.2 869.0 C1068.5 865.2 1068.2 859.8 1071.5 862.5 C1074.8 865.2 1084.6 879.4 1087.8 885.4 C1091.1 891.4 1092.7 896.5 1091.1 898.4 C1089.5 900.3 1081.6 899.0 1078.0 896.8 C1074.5 894.6 1071.5 890.0 1069.9 885.4 C1068.2 880.7 1068.0 872.8 1068.2 869.0Z" fill="none" stroke="#1a1a1a" stroke-width="1.35" />
<path d="M1070.9 872.9 C1071.1 870.2 1070.9 866.2 1073.3 868.2 C1075.6 870.2 1082.7 880.4 1085.0 884.7 C1087.4 889.0 1088.6 892.7 1087.4 894.1 C1086.2 895.5 1080.5 894.5 1078.0 892.9 C1075.4 891.3 1073.3 888.0 1072.1 884.7 C1070.9 881.3 1070.7 875.7 1070.9 872.9Z" fill="none" stroke="#1a1a1a" stroke-width="1.35" />
<ellipse cx="1052.7" cy="908.2" rx="14.0" ry="17.0" transform="rotate(-10 1052.7 908.2)" fill="#fff" stroke="#1a1a1a" stroke-width="1.35"/>
<ellipse cx="1052.7" cy="908.2" rx="10.5" ry="13.0" transform="rotate(-10 1052.7 908.2)" fill="none" stroke="#1a1a1a" stroke-width="1.35"/>
<ellipse cx="1051.7" cy="908.2" rx="7.0" ry="9.0" transform="rotate(-10 1051.7 908.2)" fill="none" stroke="#1a1a1a" stroke-width="2.2"/>
<ellipse cx="1051.2" cy="908.2" rx="4.5" ry="6.0" transform="rotate(-10 1051.2 908.2)" fill="none" stroke="#1a1a1a" stroke-width="1.35"/>
<ellipse cx="1016.5" cy="995.5" rx="25.0" ry="32.0" transform="rotate(-12 1016.5 995.5)" fill="#fff" stroke="#1a1a1a" stroke-width="1.35"/>
<ellipse cx="1011.0" cy="994.0" rx="25.6" ry="33.2" transform="rotate(-12 1011.0 994.0)" fill="#fff" stroke="#1a1a1a" stroke-width="1.35"/>
<ellipse cx="1005.5" cy="992.5" rx="26.2" ry="34.4" transform="rotate(-12 1005.5 992.5)" fill="#fff" stroke="#1a1a1a" stroke-width="1.35"/>
<ellipse cx="1000.0" cy="991.0" rx="26.8" ry="35.6" transform="rotate(-12 1000.0 991.0)" fill="#fff" stroke="#1a1a1a" stroke-width="1.35"/>
<ellipse cx="994.5" cy="989.5" rx="27.4" ry="36.8" transform="rotate(-12 994.5 989.5)" fill="#fff" stroke="#1a1a1a" stroke-width="1.35"/>
<ellipse cx="989.0" cy="988.0" rx="29.0" ry="39.0" transform="rotate(-12 989.0 988.0)" fill="#fff" stroke="#1a1a1a" stroke-width="1.8"/>
<ellipse cx="990.0" cy="988.0" rx="24.0" ry="33.0" transform="rotate(-12 990.0 988.0)" fill="none" stroke="#1a1a1a" stroke-width="1.35"/>
<ellipse cx="991.0" cy="988.0" rx="20.0" ry="28.0" transform="rotate(-12 991.0 988.0)" fill="none" stroke="#1a1a1a" stroke-width="1.35"/>
<ellipse cx="992.0" cy="988.0" rx="12.0" ry="17.0" transform="rotate(-12 992.0 988.0)" fill="none" stroke="#1a1a1a" stroke-width="1.35"/>
<ellipse cx="992.0" cy="988.0" rx="8.0" ry="11.0" transform="rotate(-12 992.0 988.0)" fill="none" stroke="#1a1a1a" stroke-width="1.8"/>
<ellipse cx="992.0" cy="988.0" rx="5.0" ry="6.0" transform="rotate(-12 992.0 988.0)" fill="none" stroke="#1a1a1a" stroke-width="1.35"/>
<path d="M1001.1 1057.2 C1003.0 1055.6 1007.6 1049.4 1012.2 1047.5 C1016.9 1045.6 1025.2 1044.7 1028.9 1046.1 C1032.6 1047.5 1034.0 1052.1 1034.4 1055.8 C1034.9 1059.5 1032.1 1066.2 1031.7 1068.3" fill="none" stroke="#1a1a1a" stroke-width="1.35" />
<path d="M1009.4 1055.8 C1010.8 1055.1 1015.0 1052.1 1017.8 1051.7 C1020.6 1051.2 1024.7 1052.8 1026.1 1053.1" fill="none" stroke="#1a1a1a" stroke-width="1.35" />
<path d="M1028.9 1071.1 C1030.3 1069.5 1033.1 1063.2 1037.2 1061.4 C1041.4 1059.5 1046.5 1059.5 1053.9 1060.0 C1061.3 1060.5 1074.5 1061.9 1081.7 1064.2 C1088.8 1066.5 1093.9 1070.0 1096.9 1073.9 C1100.0 1077.8 1100.2 1083.1 1099.7 1087.8 C1099.3 1092.4 1098.6 1098.2 1094.2 1101.7 C1089.8 1105.1 1080.0 1105.8 1073.3 1108.6 C1066.6 1111.4 1057.1 1116.7 1053.9 1118.3" fill="none" stroke="#1a1a1a" stroke-width="1.35" />
<path d="M1037.2 1107.2 C1038.6 1108.6 1042.8 1113.7 1045.6 1115.6 C1048.3 1117.4 1052.5 1117.9 1053.9 1118.3" fill="none" stroke="#1a1a1a" stroke-width="1.35" />
<path d="M1040.0 1066.9 C1042.1 1064.6 1049.5 1064.9 1055.3 1065.6 C1061.1 1066.2 1072.2 1068.1 1074.7 1071.1 C1077.3 1074.1 1074.5 1081.1 1070.6 1083.6 C1066.6 1086.2 1055.7 1087.1 1051.1 1086.4 C1046.5 1085.7 1044.6 1082.7 1042.8 1079.4 C1040.9 1076.2 1037.9 1069.3 1040.0 1066.9Z" fill="none" stroke="#1a1a1a" stroke-width="1.35" />
<path d="M1045.6 1096.1 C1047.9 1093.1 1059.2 1091.5 1065.0 1091.9 C1070.8 1092.4 1080.3 1095.9 1080.3 1098.9 C1080.3 1101.9 1069.9 1108.1 1065.0 1110.0 C1060.1 1111.9 1054.4 1112.3 1051.1 1110.0 C1047.9 1107.7 1043.2 1099.1 1045.6 1096.1Z" fill="none" stroke="#1a1a1a" stroke-width="1.35" />
<path d="M1077.5 1083.6 L1083.1 1076.7 L1090.0 1087.8 L1084.4 1094.7 L1077.5 1083.6" fill="none" stroke="#1a1a1a" stroke-width="1.35" />
<path d="M1042.8 1089.2 L1073.3 1085.7" fill="none" stroke="#1a1a1a" stroke-width="2.2" />
<path d="M1076.1 1057.2 C1078.0 1055.4 1083.1 1047.7 1087.2 1046.1 C1091.4 1044.5 1096.7 1044.7 1101.1 1047.5 C1105.5 1050.3 1110.6 1057.0 1113.6 1062.8 C1116.6 1068.6 1118.9 1076.2 1119.2 1082.2 C1119.4 1088.2 1117.5 1095.2 1115.0 1098.9 C1112.5 1102.6 1107.4 1104.0 1103.9 1104.4 C1100.4 1104.9 1095.8 1102.1 1094.2 1101.7" fill="none" stroke="#1a1a1a" stroke-width="1.35" />
<path d="M1078.9 1057.2 C1081.9 1057.5 1091.4 1056.3 1096.9 1058.6 C1102.5 1060.9 1109.2 1066.2 1112.2 1071.1 C1115.2 1076.0 1114.5 1085.0 1115.0 1087.8" fill="none" stroke="#1a1a1a" stroke-width="1.35" />
<path d="M1013.6 1126.7 L1017.8 1148.9 L1024.7 1153.1 L1028.9 1151.7 L1045.6 1143.3 L1078.9 1140.6 L1090.0 1132.2 L1087.2 1123.9" fill="none" stroke="#1a1a1a" stroke-width="1.35" />
<path d="M1028.9 1129.4 L1028.9 1151.7" fill="none" stroke="#1a1a1a" stroke-width="1.35" />
<path d="M1017.8 1123.9 C1021.5 1124.8 1035.4 1126.2 1040.0 1129.4 C1044.6 1132.7 1044.6 1141.0 1045.6 1143.3" fill="none" stroke="#1a1a1a" stroke-width="1.35" />
<path d="M1087.2 1123.9 L1091.4 1119.7 L1106.7 1128.1 L1109.4 1132.2 L1105.3 1137.8 L1090.0 1132.2" fill="none" stroke="#1a1a1a" stroke-width="1.35" />
<ellipse cx="1107.4" cy="1132.5" rx="2.5" ry="5.0" transform="rotate(-25 1107.4 1132.5)" fill="none" stroke="#1a1a1a" stroke-width="1.35"/>
<path d="M1053.9 1121.1 L1078.9 1110.0" fill="none" stroke="#1a1a1a" stroke-width="1.35" />
<path d="M1059.4 1121.8 L1080.3 1112.8" fill="none" stroke="#1a1a1a" stroke-width="1.35" />
<path d="M988.6 1028.1 C989.3 1029.7 990.7 1035.7 992.8 1037.8 C994.9 1039.9 998.8 1041.0 1001.1 1040.6 C1003.4 1040.1 1005.7 1035.9 1006.7 1035.0" fill="none" stroke="#1a1a1a" stroke-width="1.35" />
<path d="M990.0 1051.7 C990.7 1049.4 993.7 1048.4 995.6 1048.9 C997.4 1049.4 1001.1 1051.7 1001.1 1054.4 C1001.1 1057.2 997.2 1064.2 995.6 1065.6 C993.9 1066.9 992.3 1065.1 991.4 1062.8 C990.5 1060.5 989.3 1054.0 990.0 1051.7Z" fill="none" stroke="#1a1a1a" stroke-width="1.35" />
<path d="M1048.3 1135.0 C1049.3 1135.9 1053.4 1138.7 1053.9 1140.6 C1054.4 1142.4 1051.6 1145.2 1051.1 1146.1" fill="none" stroke="#1a1a1a" stroke-width="1.35" />
<path d="M1062.2 1129.4 C1063.1 1130.4 1065.9 1134.5 1067.8 1135.0 C1069.6 1135.5 1072.4 1132.7 1073.3 1132.2" fill="none" stroke="#1a1a1a" stroke-width="1.35" />
<path d="M1021.9 1137.8 C1022.3 1138.7 1024.1 1141.8 1024.0 1143.3 C1023.9 1144.8 1021.7 1146.2 1021.2 1146.8" fill="none" stroke="#1a1a1a" stroke-width="1.35" />
<path d="M1078.9 1046.1 C1081.2 1045.5 1088.1 1042.2 1092.8 1042.6 C1097.4 1043.1 1102.0 1045.1 1106.7 1048.9 C1111.3 1052.7 1117.3 1059.1 1120.6 1065.6 C1123.8 1072.0 1125.4 1081.3 1126.1 1087.8 C1126.8 1094.3 1126.8 1100.3 1124.7 1104.4 C1122.6 1108.6 1117.1 1111.2 1113.6 1112.8 C1110.1 1114.4 1105.5 1113.9 1103.9 1114.2" fill="none" stroke="#1a1a1a" stroke-width="2.4" />
<ellipse cx="1013.6" cy="1093.3" rx="19.5" ry="23.6" transform="rotate(-12 1013.6 1093.3)" fill="#fff" stroke="#1a1a1a" stroke-width="1.6"/>
<ellipse cx="1013.6" cy="1093.3" rx="15.5" ry="19.0" transform="rotate(-12 1013.6 1093.3)" fill="none" stroke="#1a1a1a" stroke-width="1.35"/>
<ellipse cx="1013.6" cy="1093.8" rx="12.0" ry="14.5" transform="rotate(-12 1013.6 1093.8)" fill="none" stroke="#1a1a1a" stroke-width="1.35"/>
<ellipse cx="1012.6" cy="1094.3" rx="8.5" ry="10.5" transform="rotate(-12 1012.6 1094.3)" fill="none" stroke="#1a1a1a" stroke-width="1.8"/>
<ellipse cx="1010.6" cy="1094.8" rx="5.0" ry="6.5" transform="rotate(-12 1010.6 1094.8)" fill="none" stroke="#1a1a1a" stroke-width="1.8"/>
<path d="M1066.8 996.0 C1069.7 994.9 1077.8 990.5 1084.4 989.4 C1091.1 988.3 1100.6 988.0 1106.5 989.4 C1112.4 990.9 1116.1 993.1 1119.7 998.3 C1123.4 1003.4 1127.1 1016.6 1128.6 1020.3" fill="none" stroke="#1a1a1a" stroke-width="1.35" />
<path d="M1071.2 998.3 L1102.1 993.8 L1097.7 1007.1 L1102.1 1024.7" fill="none" stroke="#1a1a1a" stroke-width="1.35" />
<ellipse cx="1479.0" cy="1108.0" rx="54.0" ry="71.0" transform="rotate(-14 1479.0 1108.0)" fill="#fff" stroke="#1a1a1a" stroke-width="1.35"/>
<ellipse cx="1474.0" cy="1109.5" rx="54.0" ry="71.0" transform="rotate(-14 1474.0 1109.5)" fill="#fff" stroke="#1a1a1a" stroke-width="1.35"/>
<ellipse cx="1469.0" cy="1111.0" rx="54.0" ry="71.0" transform="rotate(-14 1469.0 1111.0)" fill="#fff" stroke="#1a1a1a" stroke-width="1.35"/>
<ellipse cx="1464.0" cy="1112.5" rx="54.0" ry="71.0" transform="rotate(-14 1464.0 1112.5)" fill="#fff" stroke="#1a1a1a" stroke-width="1.35"/>
<ellipse cx="1459.0" cy="1114.0" rx="55.0" ry="72.0" transform="rotate(-14 1459.0 1114.0)" fill="#fff" stroke="#1a1a1a" stroke-width="2.2"/>
<ellipse cx="1460.0" cy="1115.0" rx="50.0" ry="66.0" transform="rotate(-14 1460.0 1115.0)" fill="none" stroke="#1a1a1a" stroke-width="1.35"/>
<ellipse cx="1461.0" cy="1117.0" rx="40.0" ry="56.0" transform="rotate(-14 1461.0 1117.0)" fill="none" stroke="#1a1a1a" stroke-width="1.35"/>
<ellipse cx="1451.0" cy="1122.0" rx="11.0" ry="14.0" transform="rotate(-14 1451.0 1122.0)" fill="none" stroke="#1a1a1a" stroke-width="1.35"/>
<ellipse cx="1449.0" cy="1123.0" rx="6.0" ry="8.0" transform="rotate(-14 1449.0 1123.0)" fill="none" stroke="#1a1a1a" stroke-width="1.35"/>
<path d="M979.6 950.8 C983.5 953.9 994.2 963.9 1002.8 969.6 C1011.4 975.3 1023.0 981.4 1031.5 985.0 C1039.9 988.6 1045.1 990.4 1053.6 991.2 C1062.0 992.0 1071.6 993.3 1082.2 989.9 C1092.9 986.4 1109.6 977.4 1117.5 970.7 C1125.4 964.0 1125.6 958.2 1129.7 949.7 C1133.7 941.3 1140.6 929.4 1141.8 919.9 C1143.0 910.4 1138.3 900.9 1136.9 892.7 C1135.6 884.5 1134.3 877.1 1133.4 870.6 C1132.6 864.2 1132.1 856.8 1131.9 854.1 L1131.9 854.1 C1130.9 858.7 1128.3 872.4 1125.9 881.7 C1123.5 891.0 1119.3 900.8 1117.5 909.9 C1115.8 919.0 1117.5 927.3 1115.3 936.5 C1113.1 945.7 1109.4 957.4 1104.3 965.2 C1099.1 972.9 1092.9 979.5 1084.4 982.8 C1076.0 986.1 1063.8 987.2 1053.6 985.0 C1043.3 982.8 1032.2 976.9 1022.7 969.6 C1013.1 962.2 1000.6 945.7 996.2 940.9Z" fill="#c9c9c9" stroke="#1a1a1a" stroke-width="1.35" />
<path d="M979.6 950.8 C983.5 953.9 994.2 963.9 1002.8 969.6 C1011.4 975.3 1023.0 981.4 1031.5 985.0 C1039.9 988.6 1045.1 990.4 1053.6 991.2 C1062.0 992.0 1071.6 993.3 1082.2 989.9 C1092.9 986.4 1109.6 977.4 1117.5 970.7 C1125.4 964.0 1125.6 958.2 1129.7 949.7 C1133.7 941.3 1139.8 924.9 1141.8 919.9" fill="none" stroke="#1a1a1a" stroke-width="2.6" />
<path d="M1171.9 797.2 C1174.9 795.6 1191.0 786.2 1200.6 785.5 C1210.2 784.9 1219.0 786.8 1229.3 793.2 C1239.6 799.7 1253.2 812.4 1262.4 824.1 C1271.6 835.9 1278.9 849.1 1284.4 863.8 C1290.0 878.5 1292.5 893.3 1295.5 912.4 C1298.4 931.5 1299.9 955.6 1302.1 978.6 C1304.3 1001.5 1307.5 1035.7 1308.7 1050.0 C1309.9 1064.4 1307.5 1052.8 1309.5 1064.4 C1311.4 1076.0 1317.9 1104.9 1320.5 1119.6 C1323.1 1134.3 1326.0 1143.9 1324.9 1152.7 C1323.8 1161.5 1319.4 1168.0 1313.9 1172.5 C1308.4 1177.1 1298.5 1178.8 1291.8 1180.0 C1285.2 1181.3 1274.2 1184.6 1274.2 1180.0 C1274.2 1175.5 1290.7 1175.6 1291.8 1152.7 C1292.9 1129.7 1283.9 1071.4 1280.8 1042.4 C1277.7 1013.4 1275.6 1000.2 1273.4 978.6 C1271.3 956.9 1270.1 930.8 1267.9 912.4 C1265.7 894.0 1264.8 882.2 1260.2 868.3 C1255.6 854.3 1247.3 839.2 1240.3 828.5 C1233.3 817.9 1227.8 809.9 1218.3 804.3 C1208.7 798.7 1190.7 796.2 1183.0 795.0 C1175.2 793.8 1169.0 798.8 1171.9 797.2Z" fill="#c9c9c9" stroke="#1a1a1a" stroke-width="1.35" />
<path d="M1171.9 797.2 C1176.7 795.3 1191.0 786.2 1200.6 785.5 C1210.2 784.9 1219.0 786.8 1229.3 793.2 C1239.6 799.7 1253.2 812.4 1262.4 824.1 C1271.6 835.9 1278.9 849.1 1284.4 863.8 C1290.0 878.5 1292.5 893.3 1295.5 912.4 C1298.4 931.5 1299.9 955.6 1302.1 978.6 C1304.3 1001.5 1307.5 1035.7 1308.7 1050.0 C1309.9 1064.4 1307.5 1052.8 1309.5 1064.4 C1311.4 1076.0 1317.9 1104.9 1320.5 1119.6 C1323.1 1134.3 1326.0 1143.9 1324.9 1152.7 C1323.8 1161.5 1319.4 1168.0 1313.9 1172.5 C1308.4 1177.1 1295.5 1178.8 1291.8 1180.0" fill="none" stroke="#1a1a1a" stroke-width="2.6" />
<path d="M1296.6 912.4 L1324.2 927.8 L1347.3 947.7 L1350.6 975.3 L1324.2 956.5 L1297.7 935.5Z" fill="#c9c9c9" stroke="#1a1a1a" stroke-width="1.35" />
<path d="M1296.6 912.4 C1301.2 915.0 1315.7 921.9 1324.2 927.8 C1332.6 933.7 1343.5 944.4 1347.3 947.7" fill="none" stroke="#1a1a1a" stroke-width="2.6" />
<path d="M1350.6 975.3 C1353.9 977.8 1364.2 986.8 1370.5 990.7 C1376.7 994.6 1381.9 997.7 1388.1 998.4 C1394.4 999.2 1402.1 997.3 1408.0 995.1 C1413.9 992.9 1419.6 989.4 1423.4 985.2 C1427.3 981.0 1429.6 978.2 1431.2 969.7 C1432.7 961.3 1432.4 940.3 1432.7 934.4 L1421.2 921.2 L1416.8 943.3 L1410.2 978.6 L1403.6 987.4 L1390.3 991.8Z" fill="#c9c9c9" stroke="#1a1a1a" stroke-width="1.35" />
<path d="M1350.6 975.3 C1353.9 977.8 1364.2 986.8 1370.5 990.7 C1376.7 994.6 1381.9 997.7 1388.1 998.4 C1394.4 999.2 1402.1 997.3 1408.0 995.1 C1413.9 992.9 1419.6 989.4 1423.4 985.2 C1427.3 981.0 1429.6 978.2 1431.2 969.7 C1432.7 961.3 1432.4 940.3 1432.7 934.4" fill="none" stroke="#1a1a1a" stroke-width="2.6" />
<ellipse cx="1452.3" cy="914.0" rx="31.0" ry="41.0" transform="rotate(-12 1452.3 914.0)" fill="#fff" stroke="#1a1a1a" stroke-width="2.8"/>
<ellipse cx="1451.0" cy="916.0" rx="21.0" ry="29.0" transform="rotate(-12 1451.0 916.0)" fill="none" stroke="#1a1a1a" stroke-width="1.35"/>
<path d="M1442.5 894.4 C1442.8 897.6 1442.5 907.7 1444.1 914.0 C1445.8 920.3 1449.6 927.3 1452.3 932.0 C1455.0 936.6 1459.1 940.1 1460.5 941.8" fill="none" stroke="#1a1a1a" stroke-width="1.35" />
<path d="M1453.9 904.2 C1454.5 906.6 1455.3 914.3 1457.2 918.9 C1459.1 923.5 1464.0 929.8 1465.4 932.0" fill="none" stroke="#1a1a1a" stroke-width="1.35" />
<ellipse cx="1463.7" cy="910.7" rx="9.0" ry="14.0" transform="rotate(-12 1463.7 910.7)" fill="none" stroke="#1a1a1a" stroke-width="1.35"/>
<ellipse cx="1465.4" cy="909.1" rx="5.0" ry="8.0" transform="rotate(-12 1465.4 909.1)" fill="none" stroke="#1a1a1a" stroke-width="1.35"/>
<path d="M1449.0 873.5 C1451.7 872.3 1459.4 865.8 1465.4 866.6 C1471.4 867.4 1479.5 872.9 1485.0 878.0 C1490.4 883.2 1494.8 889.5 1498.0 897.6 C1501.3 905.8 1502.1 913.3 1504.6 927.1 C1507.0 940.8 1508.7 953.4 1512.7 980.0 C1516.7 1006.6 1525.1 1057.7 1528.6 1086.5 C1532.0 1115.3 1534.2 1138.4 1533.4 1152.7 C1532.7 1167.0 1528.6 1168.0 1524.2 1172.5 C1519.7 1177.1 1509.4 1178.8 1506.5 1180.0 L1497.7 1180.0 C1500.6 1177.3 1513.9 1179.3 1515.3 1163.7 C1516.8 1148.1 1510.0 1114.1 1506.5 1086.5 C1503.0 1058.9 1498.2 1024.3 1494.4 998.3 C1490.5 972.2 1486.0 945.5 1483.3 930.3 C1480.7 915.2 1481.4 915.1 1478.4 907.5 C1475.4 899.8 1470.3 890.0 1465.4 884.6 C1460.5 879.1 1451.7 876.4 1449.0 874.8Z" fill="#c9c9c9" stroke="#1a1a1a" stroke-width="1.35" />
<path d="M1449.0 873.5 C1451.7 872.3 1459.4 865.8 1465.4 866.6 C1471.4 867.4 1479.5 872.9 1485.0 878.0 C1490.4 883.2 1494.8 889.5 1498.0 897.6 C1501.3 905.8 1502.1 913.3 1504.6 927.1 C1507.0 940.8 1508.7 953.4 1512.7 980.0 C1516.7 1006.6 1525.1 1057.7 1528.6 1086.5 C1532.0 1115.3 1534.2 1138.4 1533.4 1152.7 C1532.7 1167.0 1528.6 1168.0 1524.2 1172.5 C1519.7 1177.1 1509.4 1178.8 1506.5 1180.0" fill="none" stroke="#1a1a1a" stroke-width="2.6" />
<path d="M1012.2 1022.5 C1016.4 1021.5 1026.1 1016.4 1037.2 1016.2 C1048.3 1016.1 1064.5 1019.4 1078.9 1021.4 C1093.2 1023.4 1114.9 1026.5 1123.3 1028.1 C1131.8 1029.6 1128.5 1030.4 1129.6 1030.8 L1129.6 1079.4 C1127.6 1075.7 1122.1 1062.8 1117.8 1057.2 C1113.5 1051.7 1108.5 1048.9 1103.9 1046.1 C1099.3 1043.3 1098.8 1042.2 1090.0 1040.6 C1081.2 1038.9 1065.0 1038.5 1051.1 1036.4 C1037.2 1034.3 1014.1 1029.4 1006.7 1028.1Z" fill="#c9c9c9" stroke="#1a1a1a" stroke-width="1.35" />
<path d="M1006.7 1028.1 C1014.1 1029.4 1037.2 1034.3 1051.1 1036.4 C1065.0 1038.5 1081.2 1038.9 1090.0 1040.6 C1098.8 1042.2 1099.3 1043.3 1103.9 1046.1 C1108.5 1048.9 1113.8 1052.1 1117.8 1057.2 C1121.7 1062.3 1125.9 1073.4 1127.5 1076.7" fill="none" stroke="#1a1a1a" stroke-width="1.8" />
<path d="M1348.0 845.7 C1345.6 856.8 1345.9 882.2 1346.4 897.0 C1346.9 911.7 1350.0 924.1 1351.1 934.2 C1352.1 944.3 1351.1 950.3 1352.6 957.5 C1354.2 964.8 1356.0 972.5 1360.4 977.7 C1364.8 982.9 1372.8 987.3 1379.0 988.6 C1385.2 989.9 1393.0 987.8 1397.6 985.5 C1402.3 983.1 1405.4 980.5 1407.0 974.6 C1408.5 968.6 1408.0 957.5 1407.0 949.8 C1405.9 942.0 1402.3 933.2 1400.7 928.0 C1399.2 922.8 1396.3 923.9 1397.6 918.7 C1398.9 913.5 1407.0 904.7 1408.5 897.0 C1410.1 889.2 1408.3 880.9 1407.0 872.1 C1405.7 863.3 1404.9 851.7 1400.7 844.2 C1396.6 836.7 1388.8 829.4 1382.1 827.1 C1375.4 824.8 1366.1 827.1 1360.4 830.2 C1354.7 833.3 1350.3 834.6 1348.0 845.7Z" fill="#fff" stroke="#1a1a1a" stroke-width="1.6" />
<path d="M1355.7 830.2 C1357.5 829.4 1362.2 826.2 1366.6 825.5 C1371.0 824.9 1377.5 825.0 1382.1 826.3 C1386.8 827.6 1391.4 830.3 1394.5 833.3 C1397.6 836.3 1399.7 842.3 1400.7 844.2" fill="none" stroke="#1a1a1a" stroke-width="2.4" />
<path d="M1352.6 901.6 C1353.4 909.6 1355.2 938.1 1357.3 949.8 C1359.3 961.4 1360.9 966.6 1365.0 971.5 C1369.2 976.4 1377.5 979.3 1382.1 979.3 C1386.8 979.3 1391.2 976.4 1393.0 971.5 C1394.8 966.6 1393.8 958.0 1393.0 949.8 C1392.2 941.5 1389.6 928.3 1388.3 921.8 C1387.0 915.3 1385.7 912.7 1385.2 910.9" fill="none" stroke="#1a1a1a" stroke-width="1.35" />
<path d="M1365.0 903.2 L1379.0 904.7 L1388.3 918.7 L1397.6 903.2" fill="none" stroke="#1a1a1a" stroke-width="1.35" />
<path d="M1366.6 909.4 L1368.1 946.6" fill="none" stroke="#1a1a1a" stroke-width="1.35" />
<path d="M1374.3 910.9 L1375.9 943.5" fill="none" stroke="#1a1a1a" stroke-width="1.35" />
<path d="M1360.4 965.3 L1368.1 957.5 L1375.9 966.8 L1368.1 974.6 L1360.4 965.3" fill="none" stroke="#1a1a1a" stroke-width="1.35" />
<path d="M1394.5 943.5 C1396.1 946.1 1402.3 953.4 1403.9 959.1 C1405.4 964.8 1405.4 972.8 1403.9 977.7 C1402.3 982.6 1396.1 986.8 1394.5 988.6" fill="none" stroke="#1a1a1a" stroke-width="1.35" />
<path d="M1371.2 946.6 C1372.0 948.2 1374.1 955.4 1375.9 956.0 C1377.7 956.5 1381.1 950.8 1382.1 949.8" fill="none" stroke="#1a1a1a" stroke-width="1.35" />
<path d="M1355.7 946.6 C1356.5 947.7 1359.9 953.4 1360.4 952.9 C1360.9 952.3 1359.1 945.1 1358.8 943.5" fill="none" stroke="#1a1a1a" stroke-width="1.35" />
<ellipse cx="1369.7" cy="870.6" rx="23.0" ry="29.5" transform="rotate(-12 1369.7 870.6)" fill="#fff" stroke="#1a1a1a" stroke-width="1.6"/>
<ellipse cx="1369.7" cy="870.6" rx="17.0" ry="21.7" transform="rotate(-12 1369.7 870.6)" fill="none" stroke="#1a1a1a" stroke-width="1.35"/>
<ellipse cx="1369.7" cy="870.6" rx="11.6" ry="14.7" transform="rotate(-12 1369.7 870.6)" fill="none" stroke="#1a1a1a" stroke-width="1.35"/>
<ellipse cx="1369.7" cy="870.6" rx="7.0" ry="8.5" transform="rotate(-12 1369.7 870.6)" fill="none" stroke="#1a1a1a" stroke-width="1.35"/>
<ellipse cx="1370.2" cy="871.1" rx="3.5" ry="4.5" transform="rotate(-12 1370.2 871.1)" fill="none" stroke="#1a1a1a" stroke-width="1.35"/>
<path d="M1388.3 864.3 L1400.7 859.7" fill="none" stroke="#1a1a1a" stroke-width="1.35" />
<path d="M1389.9 872.1 L1402.3 869.0" fill="none" stroke="#1a1a1a" stroke-width="1.35" />
<path d="M1403.9 841.1 C1405.9 844.4 1413.7 854.0 1416.3 861.2 C1418.9 868.5 1419.9 878.6 1419.4 884.5 C1418.9 890.5 1414.2 894.9 1413.2 897.0" fill="none" stroke="#1a1a1a" stroke-width="1.35" />
<path d="M1411.6 824.0 C1414.2 827.9 1423.3 839.2 1427.1 847.3 C1431.0 855.3 1433.9 866.7 1434.9 872.1 C1435.9 877.5 1433.6 878.6 1433.4 879.9" fill="none" stroke="#1a1a1a" stroke-width="1.35" />
<path d="M1340.2 813.1 C1341.0 812.3 1342.5 809.0 1344.8 808.4 C1347.2 807.9 1351.6 808.2 1354.2 810.0 C1356.7 811.8 1358.8 816.5 1360.4 819.3 C1361.9 822.2 1363.0 825.8 1363.5 827.1" fill="none" stroke="#1a1a1a" stroke-width="1.35" />
<path d="M1344.8 833.3 C1344.3 831.5 1342.5 825.8 1341.7 822.4 C1341.0 819.1 1340.4 814.7 1340.2 813.1" fill="none" stroke="#1a1a1a" stroke-width="1.35" />
<text x="1107.6" y="727.7" font-family="Liberation Sans,sans-serif" font-weight="bold" font-size="21" text-anchor="middle" fill="#000" stroke="#000" stroke-width="0.6">1</text>
<text x="1033.3" y="754.1" font-family="Liberation Sans,sans-serif" font-weight="bold" font-size="21" text-anchor="middle" fill="#000" stroke="#000" stroke-width="0.6">2</text>
<text x="970.8" y="796.7" font-family="Liberation Sans,sans-serif" font-weight="bold" font-size="21" text-anchor="middle" fill="#000" stroke="#000" stroke-width="0.6">3</text>
<text x="958.2" y="900.0" font-family="Liberation Sans,sans-serif" font-weight="bold" font-size="21" text-anchor="middle" fill="#000" stroke="#000" stroke-width="0.6">4</text>
<text x="1451.8" y="736.5" font-family="Liberation Sans,sans-serif" font-weight="bold" font-size="21" text-anchor="middle" fill="#000" stroke="#000" stroke-width="0.6">6</text>
<text x="1492.2" y="729.0" font-family="Liberation Sans,sans-serif" font-weight="bold" font-size="21" text-anchor="middle" fill="#000" stroke="#000" stroke-width="0.6">9</text>
<text x="987.4" y="1182.3" font-family="Liberation Sans,sans-serif" font-weight="bold" font-size="21" text-anchor="middle" fill="#000" stroke="#000" stroke-width="0.6">5</text>
<path d="M1112.0 737.1 L1152.8 813.3" fill="none" stroke="#1a1a1a" stroke-width="1.35" />
<path d="M1038.1 763.6 L1119.7 901.5" fill="none" stroke="#1a1a1a" stroke-width="1.35" />
<path d="M977.4 804.4 L1016.0 839.7" fill="none" stroke="#1a1a1a" stroke-width="1.35" />
<path d="M966.4 906.0 L977.4 951.0" fill="none" stroke="#1a1a1a" stroke-width="1.35" />
<path d="M1446.9 748.2 L1397.3 846.4" fill="none" stroke="#1a1a1a" stroke-width="1.35" />
<path d="M1503.2 732.7 L1561.7 772.4" fill="none" stroke="#1a1a1a" stroke-width="1.35" />
<path d="M1017.8 1108.6 L991.4 1162.8" fill="none" stroke="#1a1a1a" stroke-width="1.35" />
</svg>
</div>
<div class="abs" id="rightside">
<div style="left:2326px;top:241px;width:31px;height:940px;background:linear-gradient(90deg,#f7f7f8,#ebebec 40%,#d9d9db)"></div>
<div style="left:2357px;top:236px;width:5px;height:949px;background:#8fb2e2"></div>
<div style="left:2317px;top:703px;width:0;height:0;border:7.5px solid transparent;border-left:8px solid #5b8ac6;border-right:none"></div>
<div class="t" style="left:2337px;top:303px;font-size:15.5px;color:#1a1a1a;writing-mode:vertical-rl;font-family:'Liberation Sans',sans-serif;line-height:13px;width:13px">Ссылки</div>
</div>
<div class="abs" id="sb"><div id="status"></div>
<div class="ssep" style="left:185px"></div>
<div class="ssep" style="left:388px"></div>
<div class="ssep" style="left:477px"></div>
<div class="ssep" style="left:511px"></div>
<div class="t st" style="left:203px;font-size:15.4px">Пользователь: PROSIS</div>
<div class="t st" style="left:404px;top:1200px;font-size:15.6px">Russian</div>
<div class="t st" style="left:527px;letter-spacing:.2px">Окружение: prosis@xe</div>
</div>
<div class="abs"><svg style="position:absolute;left:0;top:0" width="2362" height="320" viewBox="0 0 2362 320">
<defs>
<radialGradient id="orbY" cx="50%" cy="42%" r="58%"><stop offset="0" stop-color="#fffbd0"/><stop offset=".62" stop-color="#fff3a0"/><stop offset=".8" stop-color="#f9e266"/><stop offset=".94" stop-color="#f3cc30"/><stop offset="1" stop-color="#e9b61a"/></radialGradient>
<radialGradient id="orbB" cx="45%" cy="35%" r="70%"><stop offset="0" stop-color="#2a6ee0"/><stop offset=".6" stop-color="#1440b8"/><stop offset="1" stop-color="#0a2a90"/></radialGradient>
<linearGradient id="gG" x1="0" y1="0" x2="0" y2="1"><stop offset="0" stop-color="#9be36a"/><stop offset=".5" stop-color="#4cb030"/><stop offset="1" stop-color="#2a8a1c"/></linearGradient>
<linearGradient id="gP" x1="0" y1="0" x2="0" y2="1"><stop offset="0" stop-color="#d6ecd4"/><stop offset="1" stop-color="#a9d3a9"/></linearGradient>
<linearGradient id="qat" x1="0" y1="0" x2="0" y2="1"><stop offset="0" stop-color="#e9f0fa"/><stop offset=".5" stop-color="#dde8f6"/><stop offset="1" stop-color="#d3e1f3"/></linearGradient>
<linearGradient id="yH" x1="0" y1="0" x2="1" y2="0"><stop offset="0" stop-color="#f7d040"/><stop offset=".5" stop-color="#ffe880"/><stop offset="1" stop-color="#e8a818"/></linearGradient>
<linearGradient id="st" x1="0" y1="0" x2="1" y2="0"><stop offset="0" stop-color="#8a8f96"/><stop offset=".5" stop-color="#e4e6ea"/><stop offset="1" stop-color="#8a8f96"/></linearGradient>
<linearGradient id="warn" x1="0" y1="0" x2="0" y2="1"><stop offset="0" stop-color="#fff060"/><stop offset="1" stop-color="#ffc400"/></linearGradient>
<linearGradient id="wt" x1="0" y1="0" x2="1" y2="0"><stop offset="0" stop-color="#4a4a4a"/><stop offset=".5" stop-color="#2a2a2a"/><stop offset="1" stop-color="#0c0c0c"/></linearGradient>
<radialGradient id="clk" cx="40%" cy="35%" r="70%"><stop offset="0" stop-color="#dbe8fd"/><stop offset="1" stop-color="#8fb4f2"/></radialGradient>
<linearGradient id="sal" x1="0" y1="0" x2="0" y2="1"><stop offset="0" stop-color="#fde0d4"/><stop offset="1" stop-color="#f9a684"/></linearGradient>
<linearGradient id="prn" x1="0" y1="0" x2="0" y2="1"><stop offset="0" stop-color="#d8dadc"/><stop offset="1" stop-color="#a8acb0"/></linearGradient>
</defs>
<path d="M58 1.5H448c9 0 17 7 17 15s-8 15-17 15H62c2-9 2-20-4-29.500z" fill="url(#qat)" stroke="#b9cde6" stroke-width="1"/>
<path d="M60 2.500H448c8 0 15 5 16 12" fill="none" stroke="#f6f9fd" stroke-width="1.2"/>
<circle cx="29.6" cy="30.200" r="26" fill="#c9d4e2" opacity=".55"/>
<circle cx="29.6" cy="29.600" r="25.400" fill="url(#orbY)" stroke="#d8a818" stroke-width=".8"/>
<circle cx="29.9" cy="30.600" r="17.200" fill="url(#orbB)"/>
<path d="M20 22c6 3 8 8 4 14 M26 20c8 4 10 11 4 19 M33 19c9 5 12 14 3 23" fill="none" stroke="#e8f1ff" stroke-width="2.300" stroke-linecap="round" opacity=".9"/>
<path d="M18 44c6-6 16-8 26-6" fill="none" stroke="#9ec4ff" stroke-width="2" opacity=".7"/>
<circle cx="80.4" cy="16.700" r="11" fill="url(#gG)" stroke="#2c7a20" stroke-width="1"/>
<path d="M73 16.700l7.500-6.500v4h7.500v5h-7.500v4z" fill="#fff"/>
<circle cx="111.5" cy="16.700" r="11" fill="url(#gP)" stroke="#9cc79c" stroke-width="1"/>
<path d="M119 16.700l-7.500-6.500v4h-7.500v5h7.500v4z" fill="#e4f2e2"/>
<rect x="131" y="7.5" width="21.5" height="20" rx="1.5" fill="#141414"/>
<rect x="131" y="15.1" width="21.5" height="2.4" fill="#555"/>
<path d="M130.5 28.0L153.0 7.0" stroke="#fff" stroke-width="2.4"/>
<rect x="137.55" y="13.3" width="8.4" height="8.4" fill="#141414" stroke="#fff" stroke-width="1.3"/>
<circle cx="141.75" cy="17.5" r="1.4" fill="#fff"/>
<rect x="14" y="79" width="20" height="20" rx="1.5" fill="#141414"/>
<rect x="14" y="86.6" width="20" height="2.4" fill="#555"/>
<path d="M13.5 99.5L34.5 78.5" stroke="#fff" stroke-width="2.4"/>
<rect x="19.8" y="84.8" width="8.4" height="8.4" fill="#141414" stroke="#fff" stroke-width="1.3"/>
<circle cx="24.0" cy="89.0" r="1.4" fill="#fff"/>
<path d="M163.2 15h8l-4 4.500z" fill="#5a7fbf"/>
<path d="M331 14.5h8l-4 4.500z" fill="#5a7fbf"/>
<path d="M376.3 14.5h8l-4 4.500z" fill="#5a7fbf"/>
<circle cx="190.2" cy="16.700" r="11" fill="#dcdcbc" stroke="#cfcfa4" stroke-width="1"/>
<path d="M184 16.700h12.400M190.200 10.500v12.400" stroke="#c3c38e" stroke-width="3"/>
<rect x="211" y="7.500" width="21" height="19.500" fill="#fff9cf" stroke="#c9a21e" stroke-width="2"/>
<rect x="214.500" y="11.5" width="2.200" height="2" fill="#b08a08"/><rect x="218.500" y="11.5" width="10.500" height="2" fill="#b08a08"/>
<rect x="214.500" y="15.4" width="2.200" height="2" fill="#b08a08"/><rect x="218.500" y="15.4" width="10.500" height="2" fill="#b08a08"/>
<rect x="214.500" y="19.3" width="2.200" height="2" fill="#b08a08"/><rect x="218.500" y="19.3" width="10.500" height="2" fill="#b08a08"/>
<rect x="214.500" y="23.2" width="2.200" height="2" fill="#b08a08"/><rect x="218.500" y="23.2" width="10.500" height="2" fill="#b08a08"/>
<rect x="241.500" y="6" width="21" height="17" fill="#f3f5f8" stroke="#c6ccd6" stroke-width="1"/><rect x="241.500" y="6" width="21" height="3.500" fill="#7d9be6"/>
<path d="M248 27v-9l2-3h3l1 3h2l1-3h3l2 3v9h-5v-5h-4v5z" fill="#c4c4bc" stroke="#a9a9a2" stroke-width=".6"/>
<text x="271.500" y="27.500" font-family="Liberation Serif,serif" font-weight="bold" font-size="27" fill="#c8201c">A</text>
<circle cx="291.500" cy="18.500" r="3.200" fill="#f1f1ee" stroke="#c9c9c4" stroke-width=".7"/>
<g transform="translate(304 6) scale(1.05)">
<rect x="5" y="0" width="11" height="7" fill="#fdfdfd" stroke="#9aa0a8" stroke-width=".6"/>
<rect x="0" y="6" width="21" height="10" rx="2" fill="url(#prn)" stroke="#8a9098" stroke-width=".6"/>
<rect x="2" y="8" width="17" height="3.500" fill="#bfc3c8"/>
<rect x="5.500" y="13.500" width="10" height="7.500" fill="#fff" stroke="#8aa0c8" stroke-width=".6"/>
<rect x="7" y="15" width="7" height="4.500" fill="#7fb4ee"/><path d="M7 19.500l2.500-3 2 2 1.500-1.500 1 2.500z" fill="#3a78c8"/><circle cx="11.500" cy="15.500" r=".9" fill="#e8603a"/>
<rect x="13" y="12" width="3.500" height="1" fill="#2a8af0"/>
</g>
<path d="M349.500 9c4-2.500 7-2 10.500 0s7 2.500 10.500 0v14c-3.500 2.500-7 2-10.500 0s-6.500-2.500-10.500 0z" fill="#f7df60" stroke="#c9a010" stroke-width="1.300"/>
<path d="M351 11c3.500-2 6-1.500 9 .5s6 2 9 0" fill="none" stroke="#fff6b8" stroke-width="1.500"/>
<path d="M394 11l11-4 11 4v12l-11 4-11-4z" fill="#1e62d0"/><path d="M394 11l11 4 11-4-11-4z" fill="#3f88ee"/><path d="M405 15v12l11-4V11z" fill="#1650b4"/><path d="M407.500 16.500l6-2.200v1.600l-6 2.200z" fill="#9cc4ff"/>
<rect x="426" y="8.500" width="15" height="16" fill="#f4f2ec" stroke="#b9b6ac" stroke-width=".8"/>
<text x="427.500" y="17" font-family="Liberation Sans,sans-serif" font-weight="bold" font-size="9" fill="#b89a10">N</text>
<path d="M428 19.500h11M428 22h11" stroke="#c9c6bc" stroke-width="1"/>
<path d="M434 27l1.500-5 9-15.500 3 1.800-9 15.500z" fill="#e8c030" stroke="#b08a10" stroke-width=".7"/><path d="M434 27l1.500-5 3 1.800z" fill="#6a5a30"/>
<path d="M474.500 12.500h8" stroke="#1e3f8a" stroke-width="1.800"/><path d="M474.500 15.500h8l-4 4.500z" fill="#1e3f8a"/>
<rect x="2289" y="12" width="8" height="3" fill="#6f88ad"/>
<rect x="2318" y="6.500" width="7" height="6" fill="none" stroke="#6f88ad" stroke-width="1.500"/><rect x="2315.500" y="9.500" width="7" height="6" fill="#dbe7f6" stroke="#6f88ad" stroke-width="1.500"/>
<path d="M2344.500 6l9 9.500M2353.500 6l-9 9.500" stroke="#6f88ad" stroke-width="2.400"/>
<path d="M205 79h22l8.500 8v31h-30.500z" fill="#fdfdff" stroke="#9db9e8" stroke-width="1"/>
<path d="M235.500 87.500v30.500h-30.500" fill="none" stroke="#3a78d0" stroke-width="1.800"/><path d="M227 79v8.500h8.500z" fill="#d6e4f8" stroke="#6f98dc" stroke-width=".8"/>
<path d="M212 88.5h14" stroke="#8da3dc" stroke-width="1.200"/>
<path d="M212 91.6h14" stroke="#8da3dc" stroke-width="1.200"/>
<path d="M212 94.7h19" stroke="#8da3dc" stroke-width="1.200"/>
<path d="M212 97.8h19" stroke="#8da3dc" stroke-width="1.200"/>
<path d="M212 100.9h19" stroke="#8da3dc" stroke-width="1.200"/>
<path d="M212 104.0h19" stroke="#8da3dc" stroke-width="1.200"/>
<path d="M212 107.1h19" stroke="#8da3dc" stroke-width="1.200"/>
<path d="M212 110.2h19" stroke="#8da3dc" stroke-width="1.200"/>
<path d="M212 113.3h19" stroke="#8da3dc" stroke-width="1.200"/>
<rect x="201.800" y="84.500" width="6.800" height="18.500" rx="3.200" fill="#e8262a"/><circle cx="205.300" cy="109.400" r="3.500" fill="#e8262a"/>
<g transform="translate(312 106.2) scale(1.0)">
<path d="M-4.500 4.500L17 -17" stroke="#333" stroke-width="6.500" stroke-linecap="butt"/>
<circle cx="-7" cy="7" r="6" fill="none" stroke="#333" stroke-width="3.400"/>
<path d="M19.500 -29.500c-6.500 0.500-11 6-9.500 13l4 4.500c6 1.800 12.500-2 14-8.500c-4 4.500-8.500 4-11 1.500s-2.500-6.500 2.500-10.500z" fill="#333"/>
</g>
<path d="M410.500 79.500L430.500 114.500H390.500z" fill="url(#warn)" stroke="#e01414" stroke-width="4.200" stroke-linejoin="round"/>
<path d="M408.600 90h3.800l-.9 13h-2z" fill="#111"/><circle cx="410.500" cy="107.800" r="2.200" fill="#111"/>
<circle cx="531.200" cy="84.500" r="5" fill="#4a4a4a"/><rect x="529" y="87" width="4.500" height="6" fill="#3a3a3a"/>
<path d="M524.500 91.500h13.500l13.700 24.200h-40.400z" fill="url(#wt)"/>
<ellipse cx="531.500" cy="116" rx="20" ry="1.800" fill="#777" opacity=".5"/>
<text x="531.500" y="111" text-anchor="middle" font-family="Liberation Serif,serif" font-weight="bold" font-size="15" fill="#e8e8e8">1</text>
<rect x="627" y="82" width="39.500" height="33.500" fill="#9a9af4" stroke="#4a4ae0" stroke-width="1.600"/>
<path d="M630 87h10v6h8v-8M630 93h6v8h10v6h-14M652 86v8h10M644 101h6v-6h12M640 109h10v-5h6v8M660 99v12M655 104h8M631 105v6h6M636 86v5M648 110v4M658 88h5" fill="none" stroke="#eef" stroke-width="1.300"/>
<rect x="728.500" y="78.500" width="32" height="39.500" fill="#f8f8f8" stroke="#a8a8a8" stroke-width="1.300"/><path d="M761.500 80v39h-32" fill="none" stroke="#c8c8c8" stroke-width="1.500"/>
<path d="M733 83.5H748" stroke="#9a9a9a" stroke-width="1"/>
<path d="M733 86.5H757" stroke="#9a9a9a" stroke-width="1"/>
<path d="M733 89.5H757" stroke="#9a9a9a" stroke-width="1"/>
<path d="M743 92.5H757" stroke="#9a9a9a" stroke-width="1"/>
<path d="M743 95.5H757" stroke="#9a9a9a" stroke-width="1"/>
<path d="M743 98.5H757" stroke="#9a9a9a" stroke-width="1"/>
<path d="M743 101.5H757" stroke="#9a9a9a" stroke-width="1"/>
<path d="M743 104.5H757" stroke="#9a9a9a" stroke-width="1"/>
<path d="M743 107.5H757" stroke="#9a9a9a" stroke-width="1"/>
<path d="M733 110.5H757" stroke="#9a9a9a" stroke-width="1"/>
<path d="M733 113.5H757" stroke="#9a9a9a" stroke-width="1"/>
<path d="M719 94l11-4 11.500 3v11l-11 4.500-11.500-3.500z" fill="#9a9a9a"/><path d="M719 94l11-4 11.500 3-11 4z" fill="#cfcfcf"/><path d="M730.500 97v11.500l11-4.500v-11z" fill="#7d7d7d"/>
<circle cx="813.900" cy="98.200" r="18.800" fill="url(#clk)" stroke="#6a98e0" stroke-width="1.600"/><circle cx="813.900" cy="98.200" r="16" fill="none" stroke="#c4d8fa" stroke-width="1"/>
<path d="M813.900 98.200V84M813.900 98.200H805" stroke="#2848c0" stroke-width="2.200"/>
<circle cx="828.4" cy="98.2" r=".8" fill="#5a80d8"/>
<circle cx="826.5" cy="105.5" r=".8" fill="#5a80d8"/>
<circle cx="821.1" cy="110.8" r=".8" fill="#5a80d8"/>
<circle cx="813.9" cy="112.7" r=".8" fill="#5a80d8"/>
<circle cx="806.6" cy="110.8" r=".8" fill="#5a80d8"/>
<circle cx="801.3" cy="105.5" r=".8" fill="#5a80d8"/>
<circle cx="799.4" cy="98.2" r=".8" fill="#5a80d8"/>
<circle cx="801.3" cy="91.0" r=".8" fill="#5a80d8"/>
<circle cx="806.6" cy="85.6" r=".8" fill="#5a80d8"/>
<circle cx="813.9" cy="83.7" r=".8" fill="#5a80d8"/>
<circle cx="821.1" cy="85.6" r=".8" fill="#5a80d8"/>
<circle cx="826.5" cy="91.0" r=".8" fill="#5a80d8"/>
<path d="M916.500 93l-12.500 12.500M916.500 93l12.200 12.500" stroke="#9a9a9a" stroke-width="1.200"/>
<rect x="906.5" y="79.5" width="20" height="13.3" rx="2" fill="url(#sal)" stroke="#f08a66" stroke-width="1.500"/>
<rect x="895.3" y="105.8" width="17.5" height="12.5" rx="2" fill="url(#sal)" stroke="#f08a66" stroke-width="1.500"/>
<rect x="919.8" y="105.8" width="17.8" height="12.5" rx="2" fill="url(#sal)" stroke="#f08a66" stroke-width="1.500"/>
<rect x="1039.500" y="104" width="9.500" height="13" rx="1" fill="#1a1a1a"/><rect x="1066.500" y="104" width="9.500" height="13" rx="1" fill="#1a1a1a"/>
<path d="M1040 81h36l-2 6v14l2 2v7h-36v-7l2-2V87z" fill="#e8c400" stroke="#a88c00" stroke-width=".8"/>
<rect x="1047.500" y="84.500" width="20.500" height="13" fill="#222"/><rect x="1049.500" y="86" width="16.500" height="10" fill="#b8d0f8"/><path d="M1049.500 86h8v10h-8z" fill="#dce8fc"/>
<rect x="1049" y="100" width="18" height="9" fill="#3a3200"/><path d="M1052 107l12-5" stroke="#ddd" stroke-width="1"/><circle cx="1045.500" cy="103.500" r="1.800" fill="#fff" stroke="#333" stroke-width=".8"/><circle cx="1070.500" cy="103.500" r="1.800" fill="#fff" stroke="#333" stroke-width=".8"/>
<rect x="1052" y="109" width="12" height="4.500" fill="#c8a400"/>
<rect x="1254.6" y="83" width="4" height="17" fill="url(#st)" stroke="#777" stroke-width=".5"/>
<path d="M1243.6 77h16c5 .5 8 3 9.500 7l-2 1c-2-2.500-4-3.500-7.500-3.500v3.500h-9v-2h-4v2h-3z" fill="url(#st)" stroke="#6a6a6a" stroke-width=".7"/>
<rect x="1251.6" y="98.500" width="10" height="22.500" rx="1.500" fill="url(#yH)" stroke="#c89010" stroke-width=".8"/>
<rect x="1270.1" y="77" width="4" height="23" fill="url(#st)" stroke="#777" stroke-width=".5"/><rect x="1269.1" y="77" width="6" height="5" fill="#b8bcc2" stroke="#777" stroke-width=".5"/>
<rect x="1267.1" y="98.500" width="10" height="22.500" rx="1.500" fill="url(#yH)" stroke="#c89010" stroke-width=".8"/>
<path d="M1233.500 97c0-4 3-5.500 7-5.500h12c3 0 3 4 0 4h-8v2h5v12c0 2-2 3-4 3h-8c-3 0-4.500-2-4.500-5z" fill="#f8dca8" stroke="#7a5a30" stroke-width="1"/><path d="M1234 101h9M1234 105h9M1235 109h8" stroke="#7a5a30" stroke-width=".9"/>
<rect x="1449.3" y="83" width="4" height="17" fill="url(#st)" stroke="#777" stroke-width=".5"/>
<path d="M1438.3 77h16c5 .5 8 3 9.500 7l-2 1c-2-2.500-4-3.500-7.500-3.500v3.500h-9v-2h-4v2h-3z" fill="url(#st)" stroke="#6a6a6a" stroke-width=".7"/>
<rect x="1446.3" y="98.500" width="10" height="22.500" rx="1.500" fill="url(#yH)" stroke="#c89010" stroke-width=".8"/>
<rect x="1464.8" y="77" width="4" height="23" fill="url(#st)" stroke="#777" stroke-width=".5"/><rect x="1463.8" y="77" width="6" height="5" fill="#b8bcc2" stroke="#777" stroke-width=".5"/>
<rect x="1461.8" y="98.500" width="10" height="22.500" rx="1.500" fill="url(#yH)" stroke="#c89010" stroke-width=".8"/>
<path d="M1612.500 104.500l22-8.500 11 9.500-16.500 9z" fill="#a9c0f8" stroke="#4858d0" stroke-width="1.300"/><path d="M1612.500 104.500v4l17 10 16.500-9.500v-4l-16.500 9z" fill="#fbfbfb" stroke="#4858d0" stroke-width="1.200"/>
<circle cx="1613.800" cy="90.400" r="11.300" fill="url(#clk)" stroke="#6a8ae8" stroke-width="1.400"/><path d="M1614.500 83v8h-6" fill="none" stroke="#3a58c8" stroke-width="1.600"/>
<rect x="1728.500" y="76.500" width="40" height="36.500" fill="#fbfcfe" stroke="#b9c3d4" stroke-width="1"/><rect x="1728.500" y="76.500" width="40" height="5" fill="#4a78e8"/><path d="M1769 80v33.500h-39" fill="none" stroke="#c9ccd2" stroke-width="1.400"/>
<path d="M1732 86.0h10M1745 86.0h19" stroke="#9db4ec" stroke-width="1.100" stroke-dasharray="30 1.500"/>
<path d="M1732 89.3h10M1745 89.3h19" stroke="#9db4ec" stroke-width="1.100" stroke-dasharray="4 1.500"/>
<path d="M1732 92.6h10M1745 92.6h19" stroke="#9db4ec" stroke-width="1.100" stroke-dasharray="30 1.500"/>
<path d="M1732 95.9h10M1745 95.9h19" stroke="#9db4ec" stroke-width="1.100" stroke-dasharray="4 1.500"/>
<path d="M1732 99.2h10M1745 99.2h19" stroke="#9db4ec" stroke-width="1.100" stroke-dasharray="30 1.500"/>
<path d="M1732 102.5h10M1745 102.5h19" stroke="#9db4ec" stroke-width="1.100" stroke-dasharray="4 1.500"/>
<path d="M1732 105.8h10M1745 105.8h19" stroke="#9db4ec" stroke-width="1.100" stroke-dasharray="30 1.500"/>
<path d="M1732 109.1h10M1745 109.1h19" stroke="#9db4ec" stroke-width="1.100" stroke-dasharray="4 1.500"/>
<g transform="translate(1743.5 98) scale(1.36,1.05)">
<path d="M0 22V10l2.500-6V1.500h5V4l2 5v3h3V9l2-5V1.500h5V4l2.500 6v12h-8v-7h-4v7z" fill="#b9b9ac" stroke="#8d8d80" stroke-width=".8"/>
<path d="M0 18h8M14 18h8M1 12h6M15 12h6" stroke="#8d8d80" stroke-width=".9"/><path d="M3 3h4M15 3h4" stroke="#e8e8e0" stroke-width="1"/>
</g>
<g transform="translate(1814.5 77.8) scale(1.9)">
<rect x="5" y="0" width="11" height="7" fill="#fdfdfd" stroke="#9aa0a8" stroke-width=".6"/>
<rect x="0" y="6" width="21" height="10" rx="2" fill="url(#prn)" stroke="#8a9098" stroke-width=".6"/>
<rect x="2" y="8" width="17" height="3.500" fill="#bfc3c8"/>
<rect x="5.500" y="13.500" width="10" height="7.500" fill="#fff" stroke="#8aa0c8" stroke-width=".6"/>
<rect x="7" y="15" width="7" height="4.500" fill="#7fb4ee"/><path d="M7 19.500l2.500-3 2 2 1.500-1.500 1 2.500z" fill="#3a78c8"/><circle cx="11.500" cy="15.500" r=".9" fill="#e8603a"/>
<rect x="13" y="12" width="3.500" height="1" fill="#2a8af0"/>
</g>
<g transform="translate(717.5 247) scale(1.0,0.84)">
<path d="M0 22V10l2.500-6V1.500h5V4l2 5v3h3V9l2-5V1.500h5V4l2.500 6v12h-8v-7h-4v7z" fill="#c9c5aa" stroke="#3a3a32" stroke-width=".8"/>
<path d="M0 18h8M14 18h8M1 12h6M15 12h6" stroke="#3a3a32" stroke-width=".9"/><path d="M3 3h4M15 3h4" stroke="#e8e8e0" stroke-width="1"/>
</g>
<g transform="translate(73.3 219) scale(0.56)">
<path d="M-4.500 4.500L17 -17" stroke="#222" stroke-width="6.500" stroke-linecap="butt"/>
<circle cx="-7" cy="7" r="6" fill="none" stroke="#222" stroke-width="3.400"/>
<path d="M19.500 -29.500c-6.500 0.500-11 6-9.500 13l4 4.500c6 1.800 12.500-2 14-8.500c-4 4.500-8.500 4-11 1.500s-2.500-6.500 2.500-10.500z" fill="#222"/>
</g>
<path d="M2331.500 275.500l7 8" stroke="#555" stroke-width="1.600"/>
<path d="M2336 282l6-3.500 9.500 11-7 5z" fill="#d4d4d4" stroke="#9a9a9a" stroke-width=".8"/>
<ellipse cx="2338.500" cy="282" rx="4.800" ry="5.800" transform="rotate(-40 2338.500 282)" fill="#e6e6e6" stroke="#8e8e8e" stroke-width="1"/>
<ellipse cx="2347.500" cy="290.500" rx="5.500" ry="7" transform="rotate(-40 2347.500 290.500)" fill="#ececec" stroke="#8e8e8e" stroke-width="1"/>
</svg></div>

</body></html>
